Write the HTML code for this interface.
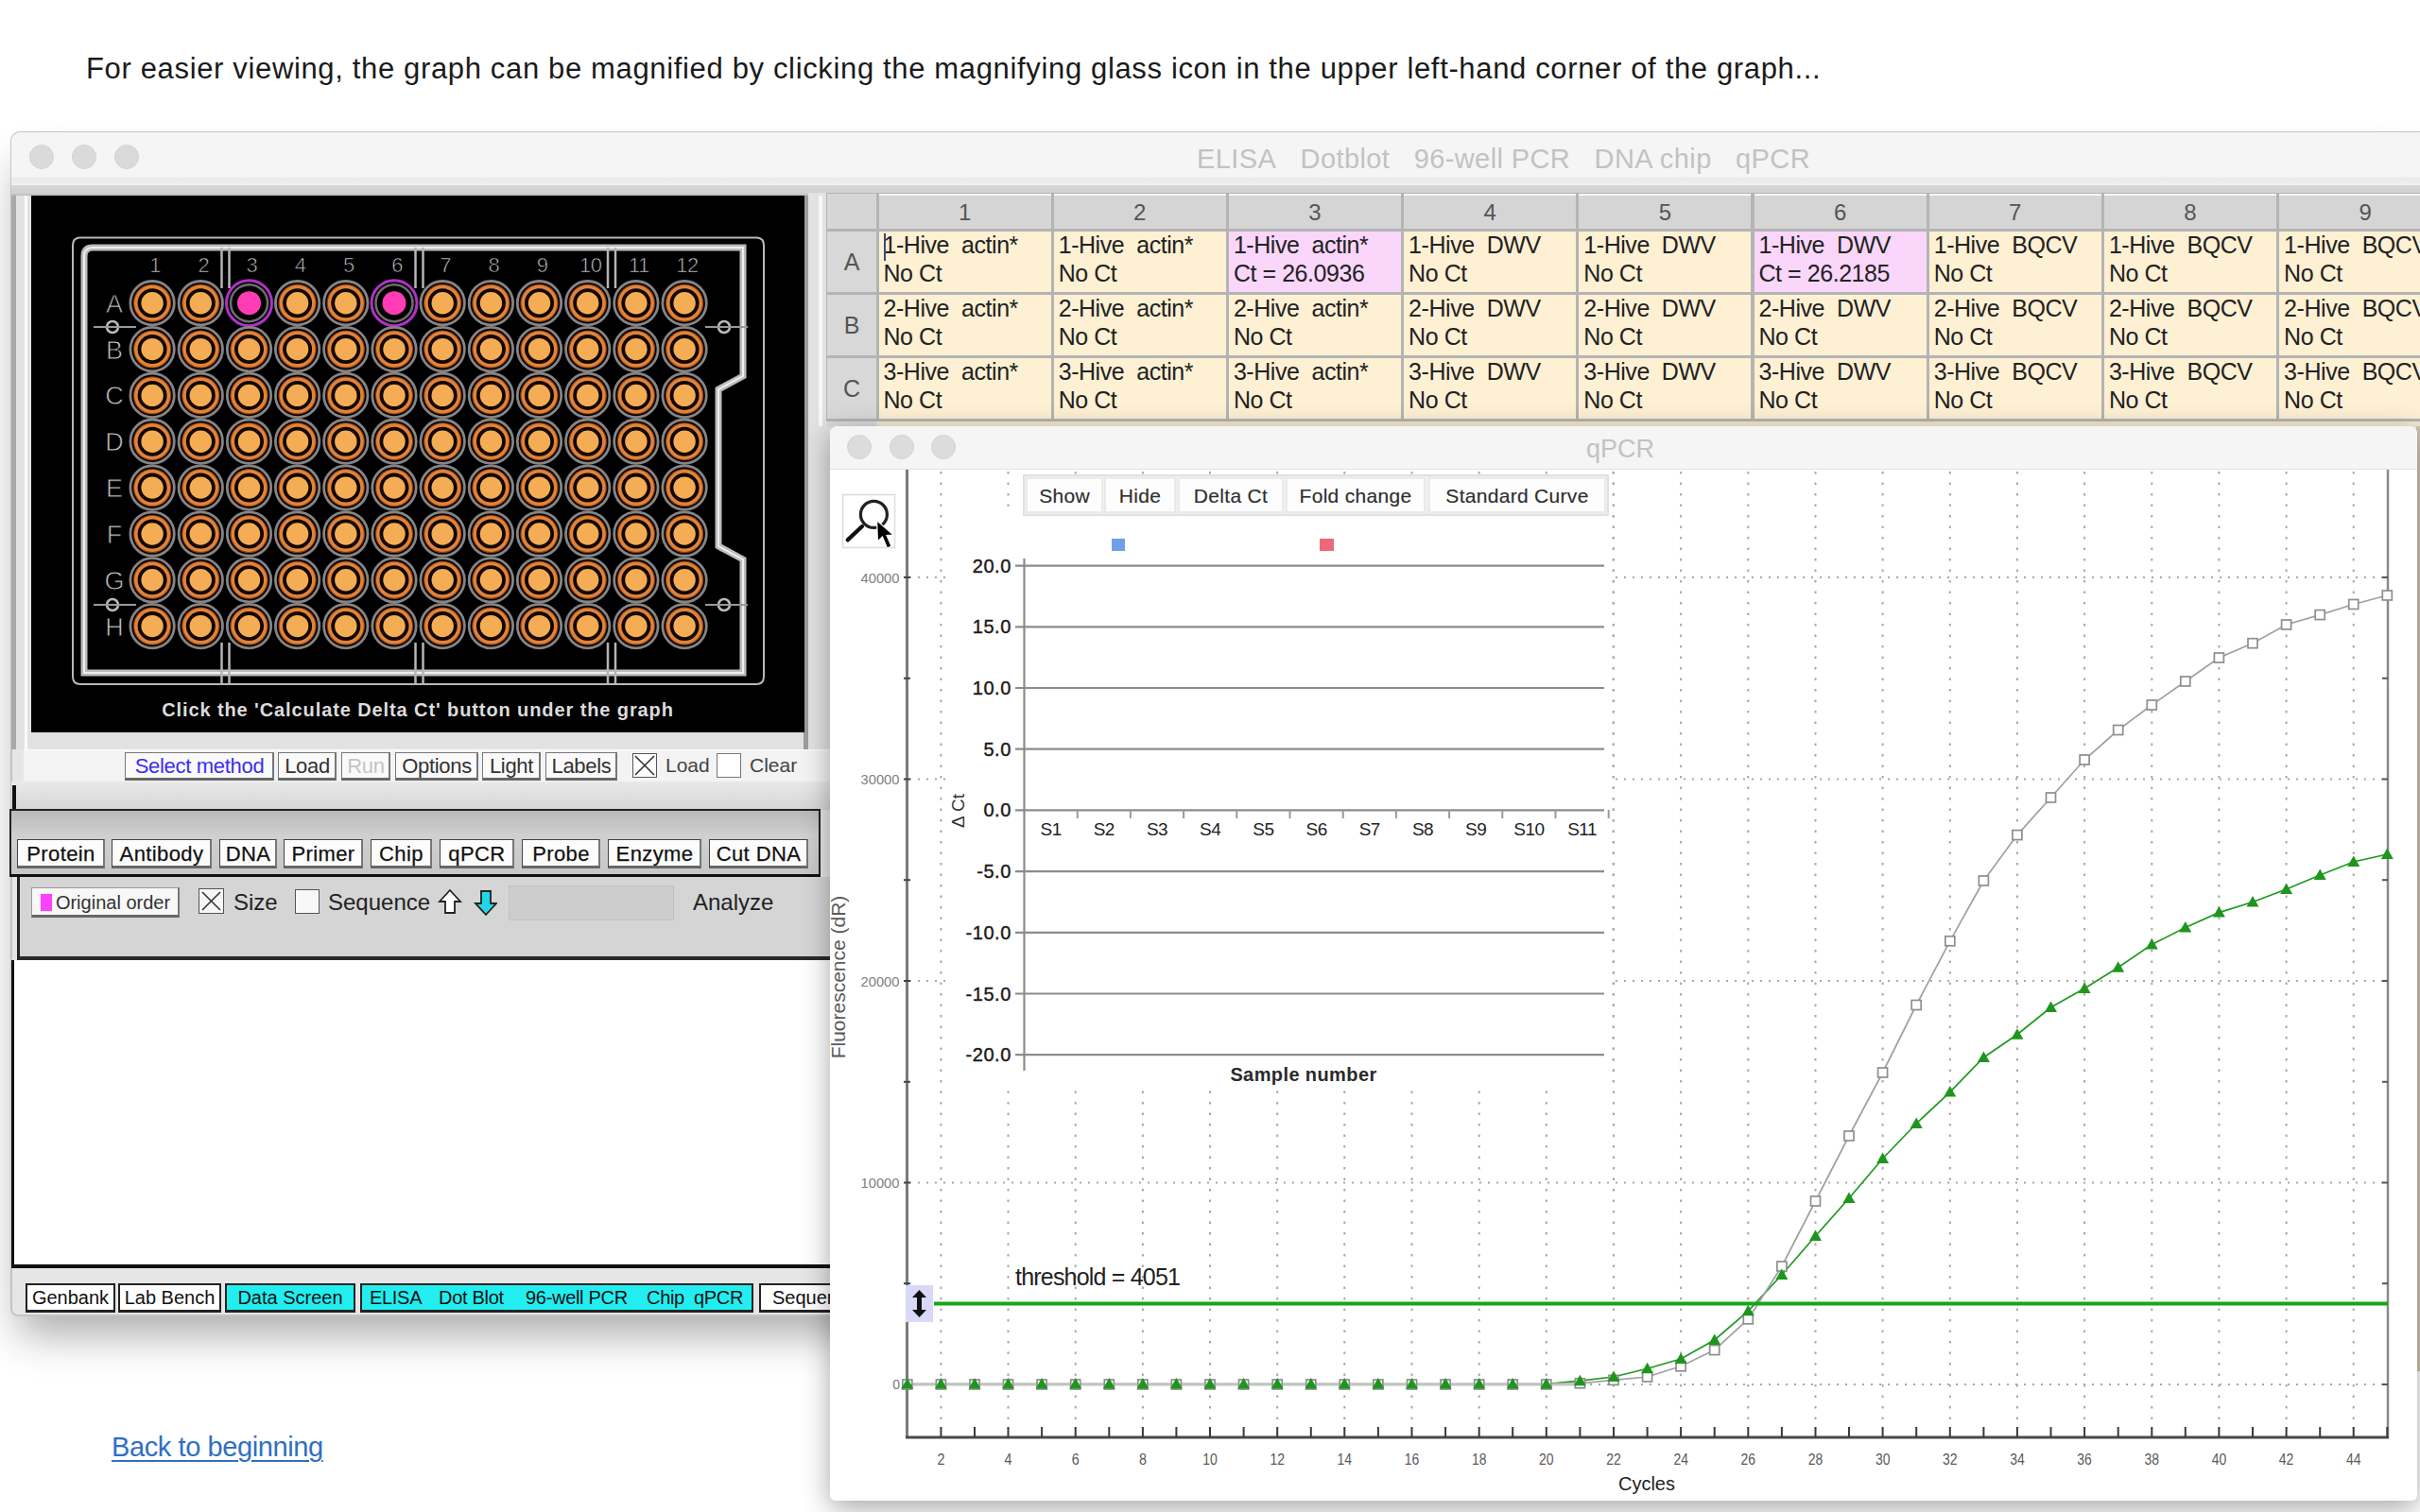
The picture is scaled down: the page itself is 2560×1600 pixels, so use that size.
<!DOCTYPE html><html><head><meta charset="utf-8"><style>
*{margin:0;padding:0;box-sizing:border-box}
html,body{width:2560px;height:1600px;overflow:hidden;background:#fff;position:relative;font-family:"Liberation Sans",sans-serif}
.a{position:absolute}
.t{position:absolute;white-space:nowrap;line-height:1}
</style></head><body>
<div class="t" style="left:91px;top:57px;font-size:31px;color:#1a1a1a;letter-spacing:0.65px">For easier viewing, the graph can be magnified by clicking the magnifying glass icon in the upper left-hand corner of the graph...</div>
<div class="a" style="left:11px;top:139px;width:2560px;height:1254px;background:#e6e6e6;box-shadow:0 28px 44px -8px rgba(0,0,0,0.32);border-radius:10px 0 0 8px;border:2px solid #c4c4c4"></div>
<div class="a" style="left:12px;top:140px;width:2560px;height:48px;background:#f5f5f5;border-radius:9px 0 0 0"></div>
<div class="a" style="left:12px;top:188px;width:2560px;height:19px;background:linear-gradient(#e8e8e8,#f2f2f2 40%,#d6d6d6 45%,#d2d2d2 85%,#b8b8b8)"></div>
<div class="a" style="left:31px;top:153px;width:26px;height:26px;border-radius:50%;background:#dadada;border:1px solid #d3d3d3"></div>
<div class="a" style="left:76px;top:153px;width:26px;height:26px;border-radius:50%;background:#dadada;border:1px solid #d3d3d3"></div>
<div class="a" style="left:121px;top:153px;width:26px;height:26px;border-radius:50%;background:#dadada;border:1px solid #d3d3d3"></div>
<div class="t" style="left:1266px;top:154px;font-size:29px;color:#c2c2c2;letter-spacing:0.4px">ELISA&nbsp;&nbsp; Dotblot&nbsp;&nbsp; 96-well PCR&nbsp;&nbsp; DNA chip&nbsp;&nbsp; qPCR</div>
<div class="a" style="left:12px;top:207px;width:866px;height:586px;background:#e2e2e2"></div>
<div class="a" style="left:12px;top:207px;width:5px;height:586px;background:#a9a9a9"></div>
<div class="a" style="left:26px;top:207px;width:3px;height:586px;background:#fbfbfb"></div>
<div class="a" style="left:850px;top:207px;width:5px;height:586px;background:#9d9d9d"></div>
<div class="a" style="left:33px;top:207px;width:818px;height:568px;background:#000"></div>
<svg class="a" style="left:0;top:0" width="880" height="800" viewBox="0 0 880 800"><g fill="none" stroke="#c8c8c8"><path d="M85 251.5 H800 Q808 251.5 808 259.5 V716 Q808 724 800 724 H85 Q77 724 77 716 V259.5 Q77 251.5 85 251.5 Z" stroke-width="2" stroke="#b8b8b8"/><path d="M98 262 H786 V398 L760 412 V578 L786 592 V712 H89 V271 Q89 262 98 262 Z" stroke-width="7" stroke="#bcbcbc"/><path d="M98 262 H786 V398 L760 412 V578 L786 592 V712 H89 V271 Q89 262 98 262 Z" stroke-width="2" stroke="#eeeeee"/><path d="M234.5 262 V305 M242.5 262 V305 M234.5 680 V724 M242.5 680 V724" stroke-width="2.5" stroke="#b5b5b5"/><path d="M439.5 262 V305 M447.5 262 V305 M439.5 680 V724 M447.5 680 V724" stroke-width="2.5" stroke="#b5b5b5"/><path d="M643 262 V305 M651 262 V305 M643 680 V724 M651 680 V724" stroke-width="2.5" stroke="#b5b5b5"/></g><circle cx="119" cy="346" r="6" fill="#000" stroke="#bbb" stroke-width="2.5"/><path d="M99 346 H144" stroke="#999" stroke-width="2"/><circle cx="766" cy="346" r="6" fill="#000" stroke="#bbb" stroke-width="2.5"/><path d="M746 346 H791" stroke="#999" stroke-width="2"/><circle cx="119" cy="640" r="6" fill="#000" stroke="#bbb" stroke-width="2.5"/><path d="M99 640 H144" stroke="#999" stroke-width="2"/><circle cx="766" cy="640" r="6" fill="#000" stroke="#bbb" stroke-width="2.5"/><path d="M746 640 H791" stroke="#999" stroke-width="2"/><text x="164.1" y="288" font-family="Liberation Sans" font-size="22" fill="#c4c4c4" stroke="#000" stroke-width="0.7" text-anchor="middle" letter-spacing="-0.5">1</text><text x="215.28" y="288" font-family="Liberation Sans" font-size="22" fill="#c4c4c4" stroke="#000" stroke-width="0.7" text-anchor="middle" letter-spacing="-0.5">2</text><text x="266.46" y="288" font-family="Liberation Sans" font-size="22" fill="#c4c4c4" stroke="#000" stroke-width="0.7" text-anchor="middle" letter-spacing="-0.5">3</text><text x="317.64" y="288" font-family="Liberation Sans" font-size="22" fill="#c4c4c4" stroke="#000" stroke-width="0.7" text-anchor="middle" letter-spacing="-0.5">4</text><text x="368.82" y="288" font-family="Liberation Sans" font-size="22" fill="#c4c4c4" stroke="#000" stroke-width="0.7" text-anchor="middle" letter-spacing="-0.5">5</text><text x="420.0" y="288" font-family="Liberation Sans" font-size="22" fill="#c4c4c4" stroke="#000" stroke-width="0.7" text-anchor="middle" letter-spacing="-0.5">6</text><text x="471.17999999999995" y="288" font-family="Liberation Sans" font-size="22" fill="#c4c4c4" stroke="#000" stroke-width="0.7" text-anchor="middle" letter-spacing="-0.5">7</text><text x="522.36" y="288" font-family="Liberation Sans" font-size="22" fill="#c4c4c4" stroke="#000" stroke-width="0.7" text-anchor="middle" letter-spacing="-0.5">8</text><text x="573.54" y="288" font-family="Liberation Sans" font-size="22" fill="#c4c4c4" stroke="#000" stroke-width="0.7" text-anchor="middle" letter-spacing="-0.5">9</text><text x="624.72" y="288" font-family="Liberation Sans" font-size="22" fill="#c4c4c4" stroke="#000" stroke-width="0.7" text-anchor="middle" letter-spacing="-0.5">10</text><text x="675.9" y="288" font-family="Liberation Sans" font-size="22" fill="#c4c4c4" stroke="#000" stroke-width="0.7" text-anchor="middle" letter-spacing="-0.5">11</text><text x="727.08" y="288" font-family="Liberation Sans" font-size="22" fill="#c4c4c4" stroke="#000" stroke-width="0.7" text-anchor="middle" letter-spacing="-0.5">12</text><text x="121" y="330.7" font-family="Liberation Sans" font-size="27" fill="#c4c4c4" stroke="#000" stroke-width="0.8" text-anchor="middle">A</text><text x="121" y="379.55" font-family="Liberation Sans" font-size="27" fill="#c4c4c4" stroke="#000" stroke-width="0.8" text-anchor="middle">B</text><text x="121" y="428.4" font-family="Liberation Sans" font-size="27" fill="#c4c4c4" stroke="#000" stroke-width="0.8" text-anchor="middle">C</text><text x="121" y="477.25" font-family="Liberation Sans" font-size="27" fill="#c4c4c4" stroke="#000" stroke-width="0.8" text-anchor="middle">D</text><text x="121" y="526.1" font-family="Liberation Sans" font-size="27" fill="#c4c4c4" stroke="#000" stroke-width="0.8" text-anchor="middle">E</text><text x="121" y="574.95" font-family="Liberation Sans" font-size="27" fill="#c4c4c4" stroke="#000" stroke-width="0.8" text-anchor="middle">F</text><text x="121" y="623.8" font-family="Liberation Sans" font-size="27" fill="#c4c4c4" stroke="#000" stroke-width="0.8" text-anchor="middle">G</text><text x="121" y="672.65" font-family="Liberation Sans" font-size="27" fill="#c4c4c4" stroke="#000" stroke-width="0.8" text-anchor="middle">H</text><circle cx="161.1" cy="320.7" r="23.2" fill="#000" stroke="#858585" stroke-width="2.8"/><circle cx="161.1" cy="320.7" r="20.2" fill="#8a3a10"/><circle cx="161.1" cy="320.7" r="19" fill="#e0843a"/><circle cx="161.1" cy="320.7" r="13.6" fill="#f5ad55" stroke="#120600" stroke-width="3.8"/><circle cx="212.3" cy="320.7" r="23.2" fill="#000" stroke="#858585" stroke-width="2.8"/><circle cx="212.3" cy="320.7" r="20.2" fill="#8a3a10"/><circle cx="212.3" cy="320.7" r="19" fill="#e0843a"/><circle cx="212.3" cy="320.7" r="13.6" fill="#f5ad55" stroke="#120600" stroke-width="3.8"/><circle cx="263.5" cy="320.7" r="24" fill="#000" stroke="#b030c8" stroke-width="3"/><circle cx="263.5" cy="320.7" r="19.5" fill="none" stroke="#6e6e6e" stroke-width="2.5"/><circle cx="263.5" cy="320.7" r="12.5" fill="#ff3cb4"/><circle cx="314.6" cy="320.7" r="23.2" fill="#000" stroke="#858585" stroke-width="2.8"/><circle cx="314.6" cy="320.7" r="20.2" fill="#8a3a10"/><circle cx="314.6" cy="320.7" r="19" fill="#e0843a"/><circle cx="314.6" cy="320.7" r="13.6" fill="#f5ad55" stroke="#120600" stroke-width="3.8"/><circle cx="365.8" cy="320.7" r="23.2" fill="#000" stroke="#858585" stroke-width="2.8"/><circle cx="365.8" cy="320.7" r="20.2" fill="#8a3a10"/><circle cx="365.8" cy="320.7" r="19" fill="#e0843a"/><circle cx="365.8" cy="320.7" r="13.6" fill="#f5ad55" stroke="#120600" stroke-width="3.8"/><circle cx="417.0" cy="320.7" r="24" fill="#000" stroke="#b030c8" stroke-width="3"/><circle cx="417.0" cy="320.7" r="19.5" fill="none" stroke="#6e6e6e" stroke-width="2.5"/><circle cx="417.0" cy="320.7" r="12.5" fill="#ff3cb4"/><circle cx="468.2" cy="320.7" r="23.2" fill="#000" stroke="#858585" stroke-width="2.8"/><circle cx="468.2" cy="320.7" r="20.2" fill="#8a3a10"/><circle cx="468.2" cy="320.7" r="19" fill="#e0843a"/><circle cx="468.2" cy="320.7" r="13.6" fill="#f5ad55" stroke="#120600" stroke-width="3.8"/><circle cx="519.4" cy="320.7" r="23.2" fill="#000" stroke="#858585" stroke-width="2.8"/><circle cx="519.4" cy="320.7" r="20.2" fill="#8a3a10"/><circle cx="519.4" cy="320.7" r="19" fill="#e0843a"/><circle cx="519.4" cy="320.7" r="13.6" fill="#f5ad55" stroke="#120600" stroke-width="3.8"/><circle cx="570.5" cy="320.7" r="23.2" fill="#000" stroke="#858585" stroke-width="2.8"/><circle cx="570.5" cy="320.7" r="20.2" fill="#8a3a10"/><circle cx="570.5" cy="320.7" r="19" fill="#e0843a"/><circle cx="570.5" cy="320.7" r="13.6" fill="#f5ad55" stroke="#120600" stroke-width="3.8"/><circle cx="621.7" cy="320.7" r="23.2" fill="#000" stroke="#858585" stroke-width="2.8"/><circle cx="621.7" cy="320.7" r="20.2" fill="#8a3a10"/><circle cx="621.7" cy="320.7" r="19" fill="#e0843a"/><circle cx="621.7" cy="320.7" r="13.6" fill="#f5ad55" stroke="#120600" stroke-width="3.8"/><circle cx="672.9" cy="320.7" r="23.2" fill="#000" stroke="#858585" stroke-width="2.8"/><circle cx="672.9" cy="320.7" r="20.2" fill="#8a3a10"/><circle cx="672.9" cy="320.7" r="19" fill="#e0843a"/><circle cx="672.9" cy="320.7" r="13.6" fill="#f5ad55" stroke="#120600" stroke-width="3.8"/><circle cx="724.1" cy="320.7" r="23.2" fill="#000" stroke="#858585" stroke-width="2.8"/><circle cx="724.1" cy="320.7" r="20.2" fill="#8a3a10"/><circle cx="724.1" cy="320.7" r="19" fill="#e0843a"/><circle cx="724.1" cy="320.7" r="13.6" fill="#f5ad55" stroke="#120600" stroke-width="3.8"/><circle cx="161.1" cy="369.6" r="23.2" fill="#000" stroke="#858585" stroke-width="2.8"/><circle cx="161.1" cy="369.6" r="20.2" fill="#8a3a10"/><circle cx="161.1" cy="369.6" r="19" fill="#e0843a"/><circle cx="161.1" cy="369.6" r="13.6" fill="#f5ad55" stroke="#120600" stroke-width="3.8"/><circle cx="212.3" cy="369.6" r="23.2" fill="#000" stroke="#858585" stroke-width="2.8"/><circle cx="212.3" cy="369.6" r="20.2" fill="#8a3a10"/><circle cx="212.3" cy="369.6" r="19" fill="#e0843a"/><circle cx="212.3" cy="369.6" r="13.6" fill="#f5ad55" stroke="#120600" stroke-width="3.8"/><circle cx="263.5" cy="369.6" r="23.2" fill="#000" stroke="#858585" stroke-width="2.8"/><circle cx="263.5" cy="369.6" r="20.2" fill="#8a3a10"/><circle cx="263.5" cy="369.6" r="19" fill="#e0843a"/><circle cx="263.5" cy="369.6" r="13.6" fill="#f5ad55" stroke="#120600" stroke-width="3.8"/><circle cx="314.6" cy="369.6" r="23.2" fill="#000" stroke="#858585" stroke-width="2.8"/><circle cx="314.6" cy="369.6" r="20.2" fill="#8a3a10"/><circle cx="314.6" cy="369.6" r="19" fill="#e0843a"/><circle cx="314.6" cy="369.6" r="13.6" fill="#f5ad55" stroke="#120600" stroke-width="3.8"/><circle cx="365.8" cy="369.6" r="23.2" fill="#000" stroke="#858585" stroke-width="2.8"/><circle cx="365.8" cy="369.6" r="20.2" fill="#8a3a10"/><circle cx="365.8" cy="369.6" r="19" fill="#e0843a"/><circle cx="365.8" cy="369.6" r="13.6" fill="#f5ad55" stroke="#120600" stroke-width="3.8"/><circle cx="417.0" cy="369.6" r="23.2" fill="#000" stroke="#858585" stroke-width="2.8"/><circle cx="417.0" cy="369.6" r="20.2" fill="#8a3a10"/><circle cx="417.0" cy="369.6" r="19" fill="#e0843a"/><circle cx="417.0" cy="369.6" r="13.6" fill="#f5ad55" stroke="#120600" stroke-width="3.8"/><circle cx="468.2" cy="369.6" r="23.2" fill="#000" stroke="#858585" stroke-width="2.8"/><circle cx="468.2" cy="369.6" r="20.2" fill="#8a3a10"/><circle cx="468.2" cy="369.6" r="19" fill="#e0843a"/><circle cx="468.2" cy="369.6" r="13.6" fill="#f5ad55" stroke="#120600" stroke-width="3.8"/><circle cx="519.4" cy="369.6" r="23.2" fill="#000" stroke="#858585" stroke-width="2.8"/><circle cx="519.4" cy="369.6" r="20.2" fill="#8a3a10"/><circle cx="519.4" cy="369.6" r="19" fill="#e0843a"/><circle cx="519.4" cy="369.6" r="13.6" fill="#f5ad55" stroke="#120600" stroke-width="3.8"/><circle cx="570.5" cy="369.6" r="23.2" fill="#000" stroke="#858585" stroke-width="2.8"/><circle cx="570.5" cy="369.6" r="20.2" fill="#8a3a10"/><circle cx="570.5" cy="369.6" r="19" fill="#e0843a"/><circle cx="570.5" cy="369.6" r="13.6" fill="#f5ad55" stroke="#120600" stroke-width="3.8"/><circle cx="621.7" cy="369.6" r="23.2" fill="#000" stroke="#858585" stroke-width="2.8"/><circle cx="621.7" cy="369.6" r="20.2" fill="#8a3a10"/><circle cx="621.7" cy="369.6" r="19" fill="#e0843a"/><circle cx="621.7" cy="369.6" r="13.6" fill="#f5ad55" stroke="#120600" stroke-width="3.8"/><circle cx="672.9" cy="369.6" r="23.2" fill="#000" stroke="#858585" stroke-width="2.8"/><circle cx="672.9" cy="369.6" r="20.2" fill="#8a3a10"/><circle cx="672.9" cy="369.6" r="19" fill="#e0843a"/><circle cx="672.9" cy="369.6" r="13.6" fill="#f5ad55" stroke="#120600" stroke-width="3.8"/><circle cx="724.1" cy="369.6" r="23.2" fill="#000" stroke="#858585" stroke-width="2.8"/><circle cx="724.1" cy="369.6" r="20.2" fill="#8a3a10"/><circle cx="724.1" cy="369.6" r="19" fill="#e0843a"/><circle cx="724.1" cy="369.6" r="13.6" fill="#f5ad55" stroke="#120600" stroke-width="3.8"/><circle cx="161.1" cy="418.4" r="23.2" fill="#000" stroke="#858585" stroke-width="2.8"/><circle cx="161.1" cy="418.4" r="20.2" fill="#8a3a10"/><circle cx="161.1" cy="418.4" r="19" fill="#e0843a"/><circle cx="161.1" cy="418.4" r="13.6" fill="#f5ad55" stroke="#120600" stroke-width="3.8"/><circle cx="212.3" cy="418.4" r="23.2" fill="#000" stroke="#858585" stroke-width="2.8"/><circle cx="212.3" cy="418.4" r="20.2" fill="#8a3a10"/><circle cx="212.3" cy="418.4" r="19" fill="#e0843a"/><circle cx="212.3" cy="418.4" r="13.6" fill="#f5ad55" stroke="#120600" stroke-width="3.8"/><circle cx="263.5" cy="418.4" r="23.2" fill="#000" stroke="#858585" stroke-width="2.8"/><circle cx="263.5" cy="418.4" r="20.2" fill="#8a3a10"/><circle cx="263.5" cy="418.4" r="19" fill="#e0843a"/><circle cx="263.5" cy="418.4" r="13.6" fill="#f5ad55" stroke="#120600" stroke-width="3.8"/><circle cx="314.6" cy="418.4" r="23.2" fill="#000" stroke="#858585" stroke-width="2.8"/><circle cx="314.6" cy="418.4" r="20.2" fill="#8a3a10"/><circle cx="314.6" cy="418.4" r="19" fill="#e0843a"/><circle cx="314.6" cy="418.4" r="13.6" fill="#f5ad55" stroke="#120600" stroke-width="3.8"/><circle cx="365.8" cy="418.4" r="23.2" fill="#000" stroke="#858585" stroke-width="2.8"/><circle cx="365.8" cy="418.4" r="20.2" fill="#8a3a10"/><circle cx="365.8" cy="418.4" r="19" fill="#e0843a"/><circle cx="365.8" cy="418.4" r="13.6" fill="#f5ad55" stroke="#120600" stroke-width="3.8"/><circle cx="417.0" cy="418.4" r="23.2" fill="#000" stroke="#858585" stroke-width="2.8"/><circle cx="417.0" cy="418.4" r="20.2" fill="#8a3a10"/><circle cx="417.0" cy="418.4" r="19" fill="#e0843a"/><circle cx="417.0" cy="418.4" r="13.6" fill="#f5ad55" stroke="#120600" stroke-width="3.8"/><circle cx="468.2" cy="418.4" r="23.2" fill="#000" stroke="#858585" stroke-width="2.8"/><circle cx="468.2" cy="418.4" r="20.2" fill="#8a3a10"/><circle cx="468.2" cy="418.4" r="19" fill="#e0843a"/><circle cx="468.2" cy="418.4" r="13.6" fill="#f5ad55" stroke="#120600" stroke-width="3.8"/><circle cx="519.4" cy="418.4" r="23.2" fill="#000" stroke="#858585" stroke-width="2.8"/><circle cx="519.4" cy="418.4" r="20.2" fill="#8a3a10"/><circle cx="519.4" cy="418.4" r="19" fill="#e0843a"/><circle cx="519.4" cy="418.4" r="13.6" fill="#f5ad55" stroke="#120600" stroke-width="3.8"/><circle cx="570.5" cy="418.4" r="23.2" fill="#000" stroke="#858585" stroke-width="2.8"/><circle cx="570.5" cy="418.4" r="20.2" fill="#8a3a10"/><circle cx="570.5" cy="418.4" r="19" fill="#e0843a"/><circle cx="570.5" cy="418.4" r="13.6" fill="#f5ad55" stroke="#120600" stroke-width="3.8"/><circle cx="621.7" cy="418.4" r="23.2" fill="#000" stroke="#858585" stroke-width="2.8"/><circle cx="621.7" cy="418.4" r="20.2" fill="#8a3a10"/><circle cx="621.7" cy="418.4" r="19" fill="#e0843a"/><circle cx="621.7" cy="418.4" r="13.6" fill="#f5ad55" stroke="#120600" stroke-width="3.8"/><circle cx="672.9" cy="418.4" r="23.2" fill="#000" stroke="#858585" stroke-width="2.8"/><circle cx="672.9" cy="418.4" r="20.2" fill="#8a3a10"/><circle cx="672.9" cy="418.4" r="19" fill="#e0843a"/><circle cx="672.9" cy="418.4" r="13.6" fill="#f5ad55" stroke="#120600" stroke-width="3.8"/><circle cx="724.1" cy="418.4" r="23.2" fill="#000" stroke="#858585" stroke-width="2.8"/><circle cx="724.1" cy="418.4" r="20.2" fill="#8a3a10"/><circle cx="724.1" cy="418.4" r="19" fill="#e0843a"/><circle cx="724.1" cy="418.4" r="13.6" fill="#f5ad55" stroke="#120600" stroke-width="3.8"/><circle cx="161.1" cy="467.2" r="23.2" fill="#000" stroke="#858585" stroke-width="2.8"/><circle cx="161.1" cy="467.2" r="20.2" fill="#8a3a10"/><circle cx="161.1" cy="467.2" r="19" fill="#e0843a"/><circle cx="161.1" cy="467.2" r="13.6" fill="#f5ad55" stroke="#120600" stroke-width="3.8"/><circle cx="212.3" cy="467.2" r="23.2" fill="#000" stroke="#858585" stroke-width="2.8"/><circle cx="212.3" cy="467.2" r="20.2" fill="#8a3a10"/><circle cx="212.3" cy="467.2" r="19" fill="#e0843a"/><circle cx="212.3" cy="467.2" r="13.6" fill="#f5ad55" stroke="#120600" stroke-width="3.8"/><circle cx="263.5" cy="467.2" r="23.2" fill="#000" stroke="#858585" stroke-width="2.8"/><circle cx="263.5" cy="467.2" r="20.2" fill="#8a3a10"/><circle cx="263.5" cy="467.2" r="19" fill="#e0843a"/><circle cx="263.5" cy="467.2" r="13.6" fill="#f5ad55" stroke="#120600" stroke-width="3.8"/><circle cx="314.6" cy="467.2" r="23.2" fill="#000" stroke="#858585" stroke-width="2.8"/><circle cx="314.6" cy="467.2" r="20.2" fill="#8a3a10"/><circle cx="314.6" cy="467.2" r="19" fill="#e0843a"/><circle cx="314.6" cy="467.2" r="13.6" fill="#f5ad55" stroke="#120600" stroke-width="3.8"/><circle cx="365.8" cy="467.2" r="23.2" fill="#000" stroke="#858585" stroke-width="2.8"/><circle cx="365.8" cy="467.2" r="20.2" fill="#8a3a10"/><circle cx="365.8" cy="467.2" r="19" fill="#e0843a"/><circle cx="365.8" cy="467.2" r="13.6" fill="#f5ad55" stroke="#120600" stroke-width="3.8"/><circle cx="417.0" cy="467.2" r="23.2" fill="#000" stroke="#858585" stroke-width="2.8"/><circle cx="417.0" cy="467.2" r="20.2" fill="#8a3a10"/><circle cx="417.0" cy="467.2" r="19" fill="#e0843a"/><circle cx="417.0" cy="467.2" r="13.6" fill="#f5ad55" stroke="#120600" stroke-width="3.8"/><circle cx="468.2" cy="467.2" r="23.2" fill="#000" stroke="#858585" stroke-width="2.8"/><circle cx="468.2" cy="467.2" r="20.2" fill="#8a3a10"/><circle cx="468.2" cy="467.2" r="19" fill="#e0843a"/><circle cx="468.2" cy="467.2" r="13.6" fill="#f5ad55" stroke="#120600" stroke-width="3.8"/><circle cx="519.4" cy="467.2" r="23.2" fill="#000" stroke="#858585" stroke-width="2.8"/><circle cx="519.4" cy="467.2" r="20.2" fill="#8a3a10"/><circle cx="519.4" cy="467.2" r="19" fill="#e0843a"/><circle cx="519.4" cy="467.2" r="13.6" fill="#f5ad55" stroke="#120600" stroke-width="3.8"/><circle cx="570.5" cy="467.2" r="23.2" fill="#000" stroke="#858585" stroke-width="2.8"/><circle cx="570.5" cy="467.2" r="20.2" fill="#8a3a10"/><circle cx="570.5" cy="467.2" r="19" fill="#e0843a"/><circle cx="570.5" cy="467.2" r="13.6" fill="#f5ad55" stroke="#120600" stroke-width="3.8"/><circle cx="621.7" cy="467.2" r="23.2" fill="#000" stroke="#858585" stroke-width="2.8"/><circle cx="621.7" cy="467.2" r="20.2" fill="#8a3a10"/><circle cx="621.7" cy="467.2" r="19" fill="#e0843a"/><circle cx="621.7" cy="467.2" r="13.6" fill="#f5ad55" stroke="#120600" stroke-width="3.8"/><circle cx="672.9" cy="467.2" r="23.2" fill="#000" stroke="#858585" stroke-width="2.8"/><circle cx="672.9" cy="467.2" r="20.2" fill="#8a3a10"/><circle cx="672.9" cy="467.2" r="19" fill="#e0843a"/><circle cx="672.9" cy="467.2" r="13.6" fill="#f5ad55" stroke="#120600" stroke-width="3.8"/><circle cx="724.1" cy="467.2" r="23.2" fill="#000" stroke="#858585" stroke-width="2.8"/><circle cx="724.1" cy="467.2" r="20.2" fill="#8a3a10"/><circle cx="724.1" cy="467.2" r="19" fill="#e0843a"/><circle cx="724.1" cy="467.2" r="13.6" fill="#f5ad55" stroke="#120600" stroke-width="3.8"/><circle cx="161.1" cy="516.1" r="23.2" fill="#000" stroke="#858585" stroke-width="2.8"/><circle cx="161.1" cy="516.1" r="20.2" fill="#8a3a10"/><circle cx="161.1" cy="516.1" r="19" fill="#e0843a"/><circle cx="161.1" cy="516.1" r="13.6" fill="#f5ad55" stroke="#120600" stroke-width="3.8"/><circle cx="212.3" cy="516.1" r="23.2" fill="#000" stroke="#858585" stroke-width="2.8"/><circle cx="212.3" cy="516.1" r="20.2" fill="#8a3a10"/><circle cx="212.3" cy="516.1" r="19" fill="#e0843a"/><circle cx="212.3" cy="516.1" r="13.6" fill="#f5ad55" stroke="#120600" stroke-width="3.8"/><circle cx="263.5" cy="516.1" r="23.2" fill="#000" stroke="#858585" stroke-width="2.8"/><circle cx="263.5" cy="516.1" r="20.2" fill="#8a3a10"/><circle cx="263.5" cy="516.1" r="19" fill="#e0843a"/><circle cx="263.5" cy="516.1" r="13.6" fill="#f5ad55" stroke="#120600" stroke-width="3.8"/><circle cx="314.6" cy="516.1" r="23.2" fill="#000" stroke="#858585" stroke-width="2.8"/><circle cx="314.6" cy="516.1" r="20.2" fill="#8a3a10"/><circle cx="314.6" cy="516.1" r="19" fill="#e0843a"/><circle cx="314.6" cy="516.1" r="13.6" fill="#f5ad55" stroke="#120600" stroke-width="3.8"/><circle cx="365.8" cy="516.1" r="23.2" fill="#000" stroke="#858585" stroke-width="2.8"/><circle cx="365.8" cy="516.1" r="20.2" fill="#8a3a10"/><circle cx="365.8" cy="516.1" r="19" fill="#e0843a"/><circle cx="365.8" cy="516.1" r="13.6" fill="#f5ad55" stroke="#120600" stroke-width="3.8"/><circle cx="417.0" cy="516.1" r="23.2" fill="#000" stroke="#858585" stroke-width="2.8"/><circle cx="417.0" cy="516.1" r="20.2" fill="#8a3a10"/><circle cx="417.0" cy="516.1" r="19" fill="#e0843a"/><circle cx="417.0" cy="516.1" r="13.6" fill="#f5ad55" stroke="#120600" stroke-width="3.8"/><circle cx="468.2" cy="516.1" r="23.2" fill="#000" stroke="#858585" stroke-width="2.8"/><circle cx="468.2" cy="516.1" r="20.2" fill="#8a3a10"/><circle cx="468.2" cy="516.1" r="19" fill="#e0843a"/><circle cx="468.2" cy="516.1" r="13.6" fill="#f5ad55" stroke="#120600" stroke-width="3.8"/><circle cx="519.4" cy="516.1" r="23.2" fill="#000" stroke="#858585" stroke-width="2.8"/><circle cx="519.4" cy="516.1" r="20.2" fill="#8a3a10"/><circle cx="519.4" cy="516.1" r="19" fill="#e0843a"/><circle cx="519.4" cy="516.1" r="13.6" fill="#f5ad55" stroke="#120600" stroke-width="3.8"/><circle cx="570.5" cy="516.1" r="23.2" fill="#000" stroke="#858585" stroke-width="2.8"/><circle cx="570.5" cy="516.1" r="20.2" fill="#8a3a10"/><circle cx="570.5" cy="516.1" r="19" fill="#e0843a"/><circle cx="570.5" cy="516.1" r="13.6" fill="#f5ad55" stroke="#120600" stroke-width="3.8"/><circle cx="621.7" cy="516.1" r="23.2" fill="#000" stroke="#858585" stroke-width="2.8"/><circle cx="621.7" cy="516.1" r="20.2" fill="#8a3a10"/><circle cx="621.7" cy="516.1" r="19" fill="#e0843a"/><circle cx="621.7" cy="516.1" r="13.6" fill="#f5ad55" stroke="#120600" stroke-width="3.8"/><circle cx="672.9" cy="516.1" r="23.2" fill="#000" stroke="#858585" stroke-width="2.8"/><circle cx="672.9" cy="516.1" r="20.2" fill="#8a3a10"/><circle cx="672.9" cy="516.1" r="19" fill="#e0843a"/><circle cx="672.9" cy="516.1" r="13.6" fill="#f5ad55" stroke="#120600" stroke-width="3.8"/><circle cx="724.1" cy="516.1" r="23.2" fill="#000" stroke="#858585" stroke-width="2.8"/><circle cx="724.1" cy="516.1" r="20.2" fill="#8a3a10"/><circle cx="724.1" cy="516.1" r="19" fill="#e0843a"/><circle cx="724.1" cy="516.1" r="13.6" fill="#f5ad55" stroke="#120600" stroke-width="3.8"/><circle cx="161.1" cy="565.0" r="23.2" fill="#000" stroke="#858585" stroke-width="2.8"/><circle cx="161.1" cy="565.0" r="20.2" fill="#8a3a10"/><circle cx="161.1" cy="565.0" r="19" fill="#e0843a"/><circle cx="161.1" cy="565.0" r="13.6" fill="#f5ad55" stroke="#120600" stroke-width="3.8"/><circle cx="212.3" cy="565.0" r="23.2" fill="#000" stroke="#858585" stroke-width="2.8"/><circle cx="212.3" cy="565.0" r="20.2" fill="#8a3a10"/><circle cx="212.3" cy="565.0" r="19" fill="#e0843a"/><circle cx="212.3" cy="565.0" r="13.6" fill="#f5ad55" stroke="#120600" stroke-width="3.8"/><circle cx="263.5" cy="565.0" r="23.2" fill="#000" stroke="#858585" stroke-width="2.8"/><circle cx="263.5" cy="565.0" r="20.2" fill="#8a3a10"/><circle cx="263.5" cy="565.0" r="19" fill="#e0843a"/><circle cx="263.5" cy="565.0" r="13.6" fill="#f5ad55" stroke="#120600" stroke-width="3.8"/><circle cx="314.6" cy="565.0" r="23.2" fill="#000" stroke="#858585" stroke-width="2.8"/><circle cx="314.6" cy="565.0" r="20.2" fill="#8a3a10"/><circle cx="314.6" cy="565.0" r="19" fill="#e0843a"/><circle cx="314.6" cy="565.0" r="13.6" fill="#f5ad55" stroke="#120600" stroke-width="3.8"/><circle cx="365.8" cy="565.0" r="23.2" fill="#000" stroke="#858585" stroke-width="2.8"/><circle cx="365.8" cy="565.0" r="20.2" fill="#8a3a10"/><circle cx="365.8" cy="565.0" r="19" fill="#e0843a"/><circle cx="365.8" cy="565.0" r="13.6" fill="#f5ad55" stroke="#120600" stroke-width="3.8"/><circle cx="417.0" cy="565.0" r="23.2" fill="#000" stroke="#858585" stroke-width="2.8"/><circle cx="417.0" cy="565.0" r="20.2" fill="#8a3a10"/><circle cx="417.0" cy="565.0" r="19" fill="#e0843a"/><circle cx="417.0" cy="565.0" r="13.6" fill="#f5ad55" stroke="#120600" stroke-width="3.8"/><circle cx="468.2" cy="565.0" r="23.2" fill="#000" stroke="#858585" stroke-width="2.8"/><circle cx="468.2" cy="565.0" r="20.2" fill="#8a3a10"/><circle cx="468.2" cy="565.0" r="19" fill="#e0843a"/><circle cx="468.2" cy="565.0" r="13.6" fill="#f5ad55" stroke="#120600" stroke-width="3.8"/><circle cx="519.4" cy="565.0" r="23.2" fill="#000" stroke="#858585" stroke-width="2.8"/><circle cx="519.4" cy="565.0" r="20.2" fill="#8a3a10"/><circle cx="519.4" cy="565.0" r="19" fill="#e0843a"/><circle cx="519.4" cy="565.0" r="13.6" fill="#f5ad55" stroke="#120600" stroke-width="3.8"/><circle cx="570.5" cy="565.0" r="23.2" fill="#000" stroke="#858585" stroke-width="2.8"/><circle cx="570.5" cy="565.0" r="20.2" fill="#8a3a10"/><circle cx="570.5" cy="565.0" r="19" fill="#e0843a"/><circle cx="570.5" cy="565.0" r="13.6" fill="#f5ad55" stroke="#120600" stroke-width="3.8"/><circle cx="621.7" cy="565.0" r="23.2" fill="#000" stroke="#858585" stroke-width="2.8"/><circle cx="621.7" cy="565.0" r="20.2" fill="#8a3a10"/><circle cx="621.7" cy="565.0" r="19" fill="#e0843a"/><circle cx="621.7" cy="565.0" r="13.6" fill="#f5ad55" stroke="#120600" stroke-width="3.8"/><circle cx="672.9" cy="565.0" r="23.2" fill="#000" stroke="#858585" stroke-width="2.8"/><circle cx="672.9" cy="565.0" r="20.2" fill="#8a3a10"/><circle cx="672.9" cy="565.0" r="19" fill="#e0843a"/><circle cx="672.9" cy="565.0" r="13.6" fill="#f5ad55" stroke="#120600" stroke-width="3.8"/><circle cx="724.1" cy="565.0" r="23.2" fill="#000" stroke="#858585" stroke-width="2.8"/><circle cx="724.1" cy="565.0" r="20.2" fill="#8a3a10"/><circle cx="724.1" cy="565.0" r="19" fill="#e0843a"/><circle cx="724.1" cy="565.0" r="13.6" fill="#f5ad55" stroke="#120600" stroke-width="3.8"/><circle cx="161.1" cy="613.8" r="23.2" fill="#000" stroke="#858585" stroke-width="2.8"/><circle cx="161.1" cy="613.8" r="20.2" fill="#8a3a10"/><circle cx="161.1" cy="613.8" r="19" fill="#e0843a"/><circle cx="161.1" cy="613.8" r="13.6" fill="#f5ad55" stroke="#120600" stroke-width="3.8"/><circle cx="212.3" cy="613.8" r="23.2" fill="#000" stroke="#858585" stroke-width="2.8"/><circle cx="212.3" cy="613.8" r="20.2" fill="#8a3a10"/><circle cx="212.3" cy="613.8" r="19" fill="#e0843a"/><circle cx="212.3" cy="613.8" r="13.6" fill="#f5ad55" stroke="#120600" stroke-width="3.8"/><circle cx="263.5" cy="613.8" r="23.2" fill="#000" stroke="#858585" stroke-width="2.8"/><circle cx="263.5" cy="613.8" r="20.2" fill="#8a3a10"/><circle cx="263.5" cy="613.8" r="19" fill="#e0843a"/><circle cx="263.5" cy="613.8" r="13.6" fill="#f5ad55" stroke="#120600" stroke-width="3.8"/><circle cx="314.6" cy="613.8" r="23.2" fill="#000" stroke="#858585" stroke-width="2.8"/><circle cx="314.6" cy="613.8" r="20.2" fill="#8a3a10"/><circle cx="314.6" cy="613.8" r="19" fill="#e0843a"/><circle cx="314.6" cy="613.8" r="13.6" fill="#f5ad55" stroke="#120600" stroke-width="3.8"/><circle cx="365.8" cy="613.8" r="23.2" fill="#000" stroke="#858585" stroke-width="2.8"/><circle cx="365.8" cy="613.8" r="20.2" fill="#8a3a10"/><circle cx="365.8" cy="613.8" r="19" fill="#e0843a"/><circle cx="365.8" cy="613.8" r="13.6" fill="#f5ad55" stroke="#120600" stroke-width="3.8"/><circle cx="417.0" cy="613.8" r="23.2" fill="#000" stroke="#858585" stroke-width="2.8"/><circle cx="417.0" cy="613.8" r="20.2" fill="#8a3a10"/><circle cx="417.0" cy="613.8" r="19" fill="#e0843a"/><circle cx="417.0" cy="613.8" r="13.6" fill="#f5ad55" stroke="#120600" stroke-width="3.8"/><circle cx="468.2" cy="613.8" r="23.2" fill="#000" stroke="#858585" stroke-width="2.8"/><circle cx="468.2" cy="613.8" r="20.2" fill="#8a3a10"/><circle cx="468.2" cy="613.8" r="19" fill="#e0843a"/><circle cx="468.2" cy="613.8" r="13.6" fill="#f5ad55" stroke="#120600" stroke-width="3.8"/><circle cx="519.4" cy="613.8" r="23.2" fill="#000" stroke="#858585" stroke-width="2.8"/><circle cx="519.4" cy="613.8" r="20.2" fill="#8a3a10"/><circle cx="519.4" cy="613.8" r="19" fill="#e0843a"/><circle cx="519.4" cy="613.8" r="13.6" fill="#f5ad55" stroke="#120600" stroke-width="3.8"/><circle cx="570.5" cy="613.8" r="23.2" fill="#000" stroke="#858585" stroke-width="2.8"/><circle cx="570.5" cy="613.8" r="20.2" fill="#8a3a10"/><circle cx="570.5" cy="613.8" r="19" fill="#e0843a"/><circle cx="570.5" cy="613.8" r="13.6" fill="#f5ad55" stroke="#120600" stroke-width="3.8"/><circle cx="621.7" cy="613.8" r="23.2" fill="#000" stroke="#858585" stroke-width="2.8"/><circle cx="621.7" cy="613.8" r="20.2" fill="#8a3a10"/><circle cx="621.7" cy="613.8" r="19" fill="#e0843a"/><circle cx="621.7" cy="613.8" r="13.6" fill="#f5ad55" stroke="#120600" stroke-width="3.8"/><circle cx="672.9" cy="613.8" r="23.2" fill="#000" stroke="#858585" stroke-width="2.8"/><circle cx="672.9" cy="613.8" r="20.2" fill="#8a3a10"/><circle cx="672.9" cy="613.8" r="19" fill="#e0843a"/><circle cx="672.9" cy="613.8" r="13.6" fill="#f5ad55" stroke="#120600" stroke-width="3.8"/><circle cx="724.1" cy="613.8" r="23.2" fill="#000" stroke="#858585" stroke-width="2.8"/><circle cx="724.1" cy="613.8" r="20.2" fill="#8a3a10"/><circle cx="724.1" cy="613.8" r="19" fill="#e0843a"/><circle cx="724.1" cy="613.8" r="13.6" fill="#f5ad55" stroke="#120600" stroke-width="3.8"/><circle cx="161.1" cy="662.6" r="23.2" fill="#000" stroke="#858585" stroke-width="2.8"/><circle cx="161.1" cy="662.6" r="20.2" fill="#8a3a10"/><circle cx="161.1" cy="662.6" r="19" fill="#e0843a"/><circle cx="161.1" cy="662.6" r="13.6" fill="#f5ad55" stroke="#120600" stroke-width="3.8"/><circle cx="212.3" cy="662.6" r="23.2" fill="#000" stroke="#858585" stroke-width="2.8"/><circle cx="212.3" cy="662.6" r="20.2" fill="#8a3a10"/><circle cx="212.3" cy="662.6" r="19" fill="#e0843a"/><circle cx="212.3" cy="662.6" r="13.6" fill="#f5ad55" stroke="#120600" stroke-width="3.8"/><circle cx="263.5" cy="662.6" r="23.2" fill="#000" stroke="#858585" stroke-width="2.8"/><circle cx="263.5" cy="662.6" r="20.2" fill="#8a3a10"/><circle cx="263.5" cy="662.6" r="19" fill="#e0843a"/><circle cx="263.5" cy="662.6" r="13.6" fill="#f5ad55" stroke="#120600" stroke-width="3.8"/><circle cx="314.6" cy="662.6" r="23.2" fill="#000" stroke="#858585" stroke-width="2.8"/><circle cx="314.6" cy="662.6" r="20.2" fill="#8a3a10"/><circle cx="314.6" cy="662.6" r="19" fill="#e0843a"/><circle cx="314.6" cy="662.6" r="13.6" fill="#f5ad55" stroke="#120600" stroke-width="3.8"/><circle cx="365.8" cy="662.6" r="23.2" fill="#000" stroke="#858585" stroke-width="2.8"/><circle cx="365.8" cy="662.6" r="20.2" fill="#8a3a10"/><circle cx="365.8" cy="662.6" r="19" fill="#e0843a"/><circle cx="365.8" cy="662.6" r="13.6" fill="#f5ad55" stroke="#120600" stroke-width="3.8"/><circle cx="417.0" cy="662.6" r="23.2" fill="#000" stroke="#858585" stroke-width="2.8"/><circle cx="417.0" cy="662.6" r="20.2" fill="#8a3a10"/><circle cx="417.0" cy="662.6" r="19" fill="#e0843a"/><circle cx="417.0" cy="662.6" r="13.6" fill="#f5ad55" stroke="#120600" stroke-width="3.8"/><circle cx="468.2" cy="662.6" r="23.2" fill="#000" stroke="#858585" stroke-width="2.8"/><circle cx="468.2" cy="662.6" r="20.2" fill="#8a3a10"/><circle cx="468.2" cy="662.6" r="19" fill="#e0843a"/><circle cx="468.2" cy="662.6" r="13.6" fill="#f5ad55" stroke="#120600" stroke-width="3.8"/><circle cx="519.4" cy="662.6" r="23.2" fill="#000" stroke="#858585" stroke-width="2.8"/><circle cx="519.4" cy="662.6" r="20.2" fill="#8a3a10"/><circle cx="519.4" cy="662.6" r="19" fill="#e0843a"/><circle cx="519.4" cy="662.6" r="13.6" fill="#f5ad55" stroke="#120600" stroke-width="3.8"/><circle cx="570.5" cy="662.6" r="23.2" fill="#000" stroke="#858585" stroke-width="2.8"/><circle cx="570.5" cy="662.6" r="20.2" fill="#8a3a10"/><circle cx="570.5" cy="662.6" r="19" fill="#e0843a"/><circle cx="570.5" cy="662.6" r="13.6" fill="#f5ad55" stroke="#120600" stroke-width="3.8"/><circle cx="621.7" cy="662.6" r="23.2" fill="#000" stroke="#858585" stroke-width="2.8"/><circle cx="621.7" cy="662.6" r="20.2" fill="#8a3a10"/><circle cx="621.7" cy="662.6" r="19" fill="#e0843a"/><circle cx="621.7" cy="662.6" r="13.6" fill="#f5ad55" stroke="#120600" stroke-width="3.8"/><circle cx="672.9" cy="662.6" r="23.2" fill="#000" stroke="#858585" stroke-width="2.8"/><circle cx="672.9" cy="662.6" r="20.2" fill="#8a3a10"/><circle cx="672.9" cy="662.6" r="19" fill="#e0843a"/><circle cx="672.9" cy="662.6" r="13.6" fill="#f5ad55" stroke="#120600" stroke-width="3.8"/><circle cx="724.1" cy="662.6" r="23.2" fill="#000" stroke="#858585" stroke-width="2.8"/><circle cx="724.1" cy="662.6" r="20.2" fill="#8a3a10"/><circle cx="724.1" cy="662.6" r="19" fill="#e0843a"/><circle cx="724.1" cy="662.6" r="13.6" fill="#f5ad55" stroke="#120600" stroke-width="3.8"/><text x="442" y="758" font-family="Liberation Sans" font-size="20" font-weight="bold" fill="#dcdcdc" text-anchor="middle" letter-spacing="0.9">Click the 'Calculate Delta Ct' button under the graph</text></svg>
<div class="a" style="left:25px;top:793px;width:853px;height:34px;background:#f3f3f3;border-top:1px solid #fff"></div>
<div class="a" style="left:132px;top:796px;width:158px;height:30px;background:#fafafa;border:1.5px solid #777;border-bottom:3px solid #666;border-right:2px solid #777;"></div>
<div class="t" style="left:132px;top:796px;width:158px;height:30px;font-size:22px;letter-spacing:-0.3px;color:#3a2ef0;text-align:center;line-height:30px">Select method</div>
<div class="a" style="left:294px;top:796px;width:62px;height:30px;background:#fafafa;border:1.5px solid #777;border-bottom:3px solid #666;border-right:2px solid #777;"></div>
<div class="t" style="left:294px;top:796px;width:62px;height:30px;font-size:22px;letter-spacing:-0.3px;color:#333;text-align:center;line-height:30px">Load</div>
<div class="a" style="left:361px;top:796px;width:52px;height:30px;background:#fafafa;border:1.5px solid #777;border-bottom:3px solid #666;border-right:2px solid #777;"></div>
<div class="t" style="left:361px;top:796px;width:52px;height:30px;font-size:22px;letter-spacing:-0.3px;color:#c4c4c4;text-align:center;line-height:30px">Run</div>
<div class="a" style="left:418px;top:796px;width:88px;height:30px;background:#fafafa;border:1.5px solid #777;border-bottom:3px solid #666;border-right:2px solid #777;"></div>
<div class="t" style="left:418px;top:796px;width:88px;height:30px;font-size:22px;letter-spacing:-0.3px;color:#333;text-align:center;line-height:30px">Options</div>
<div class="a" style="left:510px;top:796px;width:62px;height:30px;background:#fafafa;border:1.5px solid #777;border-bottom:3px solid #666;border-right:2px solid #777;"></div>
<div class="t" style="left:510px;top:796px;width:62px;height:30px;font-size:22px;letter-spacing:-0.3px;color:#333;text-align:center;line-height:30px">Light</div>
<div class="a" style="left:577px;top:796px;width:76px;height:30px;background:#fafafa;border:1.5px solid #777;border-bottom:3px solid #666;border-right:2px solid #777;"></div>
<div class="t" style="left:577px;top:796px;width:76px;height:30px;font-size:22px;letter-spacing:-0.3px;color:#333;text-align:center;line-height:30px">Labels</div>
<div class="a" style="left:669px;top:797px;width:26px;height:26px;border:1.5px solid #555;background:#fff"></div>
<svg class="a" style="left:669px;top:797px" width="26" height="26"><path d="M3 3 L23 23 M23 3 L3 23" stroke="#333" stroke-width="1.6"/></svg>
<div class="t" style="left:704px;top:799px;font-size:21px;color:#444">Load</div>
<div class="a" style="left:758px;top:797px;width:26px;height:26px;border:1.5px solid #777;background:#fff"></div>
<div class="t" style="left:793px;top:799px;font-size:21px;color:#444">Clear</div>
<div class="a" style="left:12px;top:827px;width:866px;height:30px;background:linear-gradient(#e9e9e9,#d6d6d6)"></div>
<div class="a" style="left:13px;top:831px;width:4px;height:27px;background:#111"></div>
<div class="a" style="left:10px;top:856px;width:858px;height:72px;background:linear-gradient(#b9b9b9,#d0d0d0 40%,#c7c7c7);border:2px solid #222;border-bottom:3px solid #111"></div>
<div class="a" style="left:18px;top:888px;width:93px;height:31px;background:#fcfcfc;border:1.5px solid #444;border-bottom:3px solid #666;border-right:2px solid #777;"></div>
<div class="t" style="left:18px;top:888px;width:93px;height:31px;font-size:22px;-webkit-text-stroke:0.25px #111;letter-spacing:0.4px;color:#111;text-align:center;line-height:31px">Protein</div>
<div class="a" style="left:118px;top:888px;width:106px;height:31px;background:#fcfcfc;border:1.5px solid #444;border-bottom:3px solid #666;border-right:2px solid #777;"></div>
<div class="t" style="left:118px;top:888px;width:106px;height:31px;font-size:22px;-webkit-text-stroke:0.25px #111;letter-spacing:0.4px;color:#111;text-align:center;line-height:31px">Antibody</div>
<div class="a" style="left:232px;top:888px;width:61px;height:31px;background:#fcfcfc;border:1.5px solid #444;border-bottom:3px solid #666;border-right:2px solid #777;"></div>
<div class="t" style="left:232px;top:888px;width:61px;height:31px;font-size:22px;-webkit-text-stroke:0.25px #111;letter-spacing:0.4px;color:#111;text-align:center;line-height:31px">DNA</div>
<div class="a" style="left:300px;top:888px;width:84px;height:31px;background:#fcfcfc;border:1.5px solid #444;border-bottom:3px solid #666;border-right:2px solid #777;"></div>
<div class="t" style="left:300px;top:888px;width:84px;height:31px;font-size:22px;-webkit-text-stroke:0.25px #111;letter-spacing:0.4px;color:#111;text-align:center;line-height:31px">Primer</div>
<div class="a" style="left:392px;top:888px;width:65px;height:31px;background:#fcfcfc;border:1.5px solid #444;border-bottom:3px solid #666;border-right:2px solid #777;"></div>
<div class="t" style="left:392px;top:888px;width:65px;height:31px;font-size:22px;-webkit-text-stroke:0.25px #111;letter-spacing:0.4px;color:#111;text-align:center;line-height:31px">Chip</div>
<div class="a" style="left:465px;top:888px;width:79px;height:31px;background:#fcfcfc;border:1.5px solid #444;border-bottom:3px solid #666;border-right:2px solid #777;"></div>
<div class="t" style="left:465px;top:888px;width:79px;height:31px;font-size:22px;-webkit-text-stroke:0.25px #111;letter-spacing:0.4px;color:#111;text-align:center;line-height:31px">qPCR</div>
<div class="a" style="left:552px;top:888px;width:83px;height:31px;background:#fcfcfc;border:1.5px solid #444;border-bottom:3px solid #666;border-right:2px solid #777;"></div>
<div class="t" style="left:552px;top:888px;width:83px;height:31px;font-size:22px;-webkit-text-stroke:0.25px #111;letter-spacing:0.4px;color:#111;text-align:center;line-height:31px">Probe</div>
<div class="a" style="left:643px;top:888px;width:99px;height:31px;background:#fcfcfc;border:1.5px solid #444;border-bottom:3px solid #666;border-right:2px solid #777;"></div>
<div class="t" style="left:643px;top:888px;width:99px;height:31px;font-size:22px;-webkit-text-stroke:0.25px #111;letter-spacing:0.4px;color:#111;text-align:center;line-height:31px">Enzyme</div>
<div class="a" style="left:750px;top:888px;width:105px;height:31px;background:#fcfcfc;border:1.5px solid #444;border-bottom:3px solid #666;border-right:2px solid #777;"></div>
<div class="t" style="left:750px;top:888px;width:105px;height:31px;font-size:22px;-webkit-text-stroke:0.25px #111;letter-spacing:0.4px;color:#111;text-align:center;line-height:31px">Cut DNA</div>
<div class="a" style="left:18px;top:928px;width:860px;height:88px;background:#d5d5d5;border-left:3px solid #222;border-bottom:4px solid #2a2a2a"></div>
<div class="a" style="left:33px;top:939px;width:157px;height:32px;background:#f8f8f8;border:1.5px solid #999;border-bottom:3px solid #666;border-right:2px solid #777;"></div>
<div class="t" style="left:33px;top:939px;width:157px;height:32px;font-size:20px;color:#333;text-align:center;line-height:32px"><span style="display:inline-block;width:12px;height:18px;background:#ff40ff;margin-right:4px;vertical-align:-2px"></span>Original order</div>
<div class="a" style="left:210px;top:940px;width:27px;height:27px;border:1.5px solid #555;background:#f6f6f6"></div>
<svg class="a" style="left:210px;top:940px" width="27" height="27"><path d="M4 4 L23 23 M23 4 L4 23" stroke="#333" stroke-width="1.6"/></svg>
<div class="t" style="left:247px;top:943px;font-size:24px;color:#222">Size</div>
<div class="a" style="left:312px;top:941px;width:26px;height:26px;border:1.5px solid #555;background:#f8f8f8"></div>
<div class="t" style="left:347px;top:943px;font-size:24px;color:#222">Sequence</div>
<svg class="a" style="left:462px;top:940px" width="64" height="30"><path d="M14 2 L25 14 H19 V26 H9 V14 H3 Z" fill="#fff" stroke="#222" stroke-width="1.8"/><path d="M52 28 L63 16 H57 V3 H47 V16 H41 Z" fill="#22d8e8" stroke="#222" stroke-width="1.8"/></svg>
<div class="a" style="left:538px;top:937px;width:175px;height:37px;background:#cdcdcd;border:1px solid #c2c2c2"></div>
<div class="t" style="left:733px;top:943px;font-size:24px;color:#222">Analyze</div>
<div class="a" style="left:12px;top:1016px;width:866px;height:326px;background:#fff;border-left:3px solid #111;border-bottom:4px solid #111"></div>
<div class="a" style="left:27px;top:1358px;width:95px;height:31px;background:#fff;border:2px solid #222;border-bottom:3px solid #222"></div>
<div class="t" style="left:27px;top:1358px;width:95px;height:31px;line-height:31px;font-size:20px;color:#111;text-align:center">Genbank</div>
<div class="a" style="left:125px;top:1358px;width:109px;height:31px;background:#fff;border:2px solid #222;border-bottom:3px solid #222"></div>
<div class="t" style="left:125px;top:1358px;width:109px;height:31px;line-height:31px;font-size:20px;color:#111;text-align:center">Lab Bench</div>
<div class="a" style="left:238px;top:1358px;width:138px;height:31px;background:#22eef0;border:2px solid #222;border-bottom:3px solid #222"></div>
<div class="t" style="left:238px;top:1358px;width:138px;height:31px;line-height:31px;font-size:20px;color:#111;text-align:center">Data Screen</div>
<div class="a" style="left:381px;top:1358px;width:416px;height:31px;background:#22eef0;border:2px solid #222;border-bottom:3px solid #222"></div>
<div class="t" style="left:391px;top:1358px;height:31px;line-height:31px;font-size:20px;color:#111;letter-spacing:-0.3px">ELISA</div>
<div class="t" style="left:464px;top:1358px;height:31px;line-height:31px;font-size:20px;color:#111;letter-spacing:-0.3px">Dot Blot</div>
<div class="t" style="left:556px;top:1358px;height:31px;line-height:31px;font-size:20px;color:#111;letter-spacing:-0.3px">96-well PCR</div>
<div class="t" style="left:684px;top:1358px;height:31px;line-height:31px;font-size:20px;color:#111;letter-spacing:-0.3px">Chip</div>
<div class="t" style="left:734px;top:1358px;height:31px;line-height:31px;font-size:20px;color:#111;letter-spacing:-0.3px">qPCR</div>
<div class="a" style="left:803px;top:1358px;width:97px;height:31px;background:#fff;border:2px solid #222;border-bottom:3px solid #222"></div>
<div class="t" style="left:803px;top:1358px;width:97px;height:31px;line-height:31px;font-size:20px;color:#111;text-align:center">Sequen</div>
<div class="a" style="left:855px;top:204px;width:1710px;height:247px;background:#e2e2e2"></div>
<div class="a" style="left:866px;top:207px;width:4px;height:244px;background:#f8f8f8"></div>
<div class="a" style="left:874px;top:204px;width:1700px;height:242px;background:#b4b4b4"></div>
<div class="a" style="left:875px;top:205px;width:52px;height:37px;background:#d6d6d6"></div>
<div class="a" style="left:875px;top:245px;width:52px;height:64px;background:#d8d8d8"></div>
<div class="t" style="left:875px;top:245px;width:52px;height:64px;line-height:64px;text-align:center;font-size:25px;color:#555">A</div>
<div class="a" style="left:875px;top:312px;width:52px;height:64px;background:#d8d8d8"></div>
<div class="t" style="left:875px;top:312px;width:52px;height:64px;line-height:64px;text-align:center;font-size:25px;color:#555">B</div>
<div class="a" style="left:875px;top:379px;width:52px;height:64px;background:#d8d8d8"></div>
<div class="t" style="left:875px;top:379px;width:52px;height:64px;line-height:64px;text-align:center;font-size:25px;color:#555">C</div>
<div class="a" style="left:929.5px;top:205px;width:182.2px;height:37px;background:#d5d5d5;border-top:2px solid #f8f8f8"></div>
<div class="t" style="left:929.5px;top:205px;width:182.2px;height:37px;line-height:40px;text-align:center;font-size:24px;color:#555">1</div>
<div class="a" style="left:929.5px;top:245px;width:182.2px;height:64px;background:#fdf0d3"></div>
<div class="t" style="left:934.5px;top:243.5px;font-size:25px;line-height:30.5px;color:#222;letter-spacing:-0.45px;white-space:pre">1-Hive&nbsp; actin*<br>No Ct</div>
<div class="a" style="left:1114.7px;top:205px;width:182.2px;height:37px;background:#d5d5d5;border-top:2px solid #f8f8f8"></div>
<div class="t" style="left:1114.7px;top:205px;width:182.2px;height:37px;line-height:40px;text-align:center;font-size:24px;color:#555">2</div>
<div class="a" style="left:1114.7px;top:245px;width:182.2px;height:64px;background:#fdf0d3"></div>
<div class="t" style="left:1119.7px;top:243.5px;font-size:25px;line-height:30.5px;color:#222;letter-spacing:-0.45px;white-space:pre">1-Hive&nbsp; actin*<br>No Ct</div>
<div class="a" style="left:1299.9px;top:205px;width:182.2px;height:37px;background:#d5d5d5;border-top:2px solid #f8f8f8"></div>
<div class="t" style="left:1299.9px;top:205px;width:182.2px;height:37px;line-height:40px;text-align:center;font-size:24px;color:#555">3</div>
<div class="a" style="left:1299.9px;top:245px;width:182.2px;height:64px;background:#fad6fa"></div>
<div class="t" style="left:1304.9px;top:243.5px;font-size:25px;line-height:30.5px;color:#222;letter-spacing:-0.45px;white-space:pre">1-Hive&nbsp; actin*<br>Ct = 26.0936</div>
<div class="a" style="left:1485.1px;top:205px;width:182.2px;height:37px;background:#d5d5d5;border-top:2px solid #f8f8f8"></div>
<div class="t" style="left:1485.1px;top:205px;width:182.2px;height:37px;line-height:40px;text-align:center;font-size:24px;color:#555">4</div>
<div class="a" style="left:1485.1px;top:245px;width:182.2px;height:64px;background:#fdf0d3"></div>
<div class="t" style="left:1490.1px;top:243.5px;font-size:25px;line-height:30.5px;color:#222;letter-spacing:-0.45px;white-space:pre">1-Hive&nbsp; DWV<br>No Ct</div>
<div class="a" style="left:1670.3px;top:205px;width:182.2px;height:37px;background:#d5d5d5;border-top:2px solid #f8f8f8"></div>
<div class="t" style="left:1670.3px;top:205px;width:182.2px;height:37px;line-height:40px;text-align:center;font-size:24px;color:#555">5</div>
<div class="a" style="left:1670.3px;top:245px;width:182.2px;height:64px;background:#fdf0d3"></div>
<div class="t" style="left:1675.3px;top:243.5px;font-size:25px;line-height:30.5px;color:#222;letter-spacing:-0.45px;white-space:pre">1-Hive&nbsp; DWV<br>No Ct</div>
<div class="a" style="left:1855.5px;top:205px;width:182.2px;height:37px;background:#d5d5d5;border-top:2px solid #f8f8f8"></div>
<div class="t" style="left:1855.5px;top:205px;width:182.2px;height:37px;line-height:40px;text-align:center;font-size:24px;color:#555">6</div>
<div class="a" style="left:1855.5px;top:245px;width:182.2px;height:64px;background:#fad6fa"></div>
<div class="t" style="left:1860.5px;top:243.5px;font-size:25px;line-height:30.5px;color:#222;letter-spacing:-0.45px;white-space:pre">1-Hive&nbsp; DWV<br>Ct = 26.2185</div>
<div class="a" style="left:2040.7px;top:205px;width:182.2px;height:37px;background:#d5d5d5;border-top:2px solid #f8f8f8"></div>
<div class="t" style="left:2040.7px;top:205px;width:182.2px;height:37px;line-height:40px;text-align:center;font-size:24px;color:#555">7</div>
<div class="a" style="left:2040.7px;top:245px;width:182.2px;height:64px;background:#fdf0d3"></div>
<div class="t" style="left:2045.7px;top:243.5px;font-size:25px;line-height:30.5px;color:#222;letter-spacing:-0.45px;white-space:pre">1-Hive&nbsp; BQCV<br>No Ct</div>
<div class="a" style="left:2225.9px;top:205px;width:182.2px;height:37px;background:#d5d5d5;border-top:2px solid #f8f8f8"></div>
<div class="t" style="left:2225.9px;top:205px;width:182.2px;height:37px;line-height:40px;text-align:center;font-size:24px;color:#555">8</div>
<div class="a" style="left:2225.9px;top:245px;width:182.2px;height:64px;background:#fdf0d3"></div>
<div class="t" style="left:2230.9px;top:243.5px;font-size:25px;line-height:30.5px;color:#222;letter-spacing:-0.45px;white-space:pre">1-Hive&nbsp; BQCV<br>No Ct</div>
<div class="a" style="left:2411.1px;top:205px;width:182.2px;height:37px;background:#d5d5d5;border-top:2px solid #f8f8f8"></div>
<div class="t" style="left:2411.1px;top:205px;width:182.2px;height:37px;line-height:40px;text-align:center;font-size:24px;color:#555">9</div>
<div class="a" style="left:2411.1px;top:245px;width:182.2px;height:64px;background:#fdf0d3"></div>
<div class="t" style="left:2416.1px;top:243.5px;font-size:25px;line-height:30.5px;color:#222;letter-spacing:-0.45px;white-space:pre">1-Hive&nbsp; BQCV<br>No Ct</div>
<div class="a" style="left:929.5px;top:312px;width:182.2px;height:64px;background:#fdf0d3"></div>
<div class="t" style="left:934.5px;top:310.5px;font-size:25px;line-height:30.5px;color:#222;letter-spacing:-0.45px;white-space:pre">2-Hive&nbsp; actin*<br>No Ct</div>
<div class="a" style="left:1114.7px;top:312px;width:182.2px;height:64px;background:#fdf0d3"></div>
<div class="t" style="left:1119.7px;top:310.5px;font-size:25px;line-height:30.5px;color:#222;letter-spacing:-0.45px;white-space:pre">2-Hive&nbsp; actin*<br>No Ct</div>
<div class="a" style="left:1299.9px;top:312px;width:182.2px;height:64px;background:#fdf0d3"></div>
<div class="t" style="left:1304.9px;top:310.5px;font-size:25px;line-height:30.5px;color:#222;letter-spacing:-0.45px;white-space:pre">2-Hive&nbsp; actin*<br>No Ct</div>
<div class="a" style="left:1485.1px;top:312px;width:182.2px;height:64px;background:#fdf0d3"></div>
<div class="t" style="left:1490.1px;top:310.5px;font-size:25px;line-height:30.5px;color:#222;letter-spacing:-0.45px;white-space:pre">2-Hive&nbsp; DWV<br>No Ct</div>
<div class="a" style="left:1670.3px;top:312px;width:182.2px;height:64px;background:#fdf0d3"></div>
<div class="t" style="left:1675.3px;top:310.5px;font-size:25px;line-height:30.5px;color:#222;letter-spacing:-0.45px;white-space:pre">2-Hive&nbsp; DWV<br>No Ct</div>
<div class="a" style="left:1855.5px;top:312px;width:182.2px;height:64px;background:#fdf0d3"></div>
<div class="t" style="left:1860.5px;top:310.5px;font-size:25px;line-height:30.5px;color:#222;letter-spacing:-0.45px;white-space:pre">2-Hive&nbsp; DWV<br>No Ct</div>
<div class="a" style="left:2040.7px;top:312px;width:182.2px;height:64px;background:#fdf0d3"></div>
<div class="t" style="left:2045.7px;top:310.5px;font-size:25px;line-height:30.5px;color:#222;letter-spacing:-0.45px;white-space:pre">2-Hive&nbsp; BQCV<br>No Ct</div>
<div class="a" style="left:2225.9px;top:312px;width:182.2px;height:64px;background:#fdf0d3"></div>
<div class="t" style="left:2230.9px;top:310.5px;font-size:25px;line-height:30.5px;color:#222;letter-spacing:-0.45px;white-space:pre">2-Hive&nbsp; BQCV<br>No Ct</div>
<div class="a" style="left:2411.1px;top:312px;width:182.2px;height:64px;background:#fdf0d3"></div>
<div class="t" style="left:2416.1px;top:310.5px;font-size:25px;line-height:30.5px;color:#222;letter-spacing:-0.45px;white-space:pre">2-Hive&nbsp; BQCV<br>No Ct</div>
<div class="a" style="left:929.5px;top:379px;width:182.2px;height:64px;background:#fdf0d3"></div>
<div class="t" style="left:934.5px;top:377.5px;font-size:25px;line-height:30.5px;color:#222;letter-spacing:-0.45px;white-space:pre">3-Hive&nbsp; actin*<br>No Ct</div>
<div class="a" style="left:1114.7px;top:379px;width:182.2px;height:64px;background:#fdf0d3"></div>
<div class="t" style="left:1119.7px;top:377.5px;font-size:25px;line-height:30.5px;color:#222;letter-spacing:-0.45px;white-space:pre">3-Hive&nbsp; actin*<br>No Ct</div>
<div class="a" style="left:1299.9px;top:379px;width:182.2px;height:64px;background:#fdf0d3"></div>
<div class="t" style="left:1304.9px;top:377.5px;font-size:25px;line-height:30.5px;color:#222;letter-spacing:-0.45px;white-space:pre">3-Hive&nbsp; actin*<br>No Ct</div>
<div class="a" style="left:1485.1px;top:379px;width:182.2px;height:64px;background:#fdf0d3"></div>
<div class="t" style="left:1490.1px;top:377.5px;font-size:25px;line-height:30.5px;color:#222;letter-spacing:-0.45px;white-space:pre">3-Hive&nbsp; DWV<br>No Ct</div>
<div class="a" style="left:1670.3px;top:379px;width:182.2px;height:64px;background:#fdf0d3"></div>
<div class="t" style="left:1675.3px;top:377.5px;font-size:25px;line-height:30.5px;color:#222;letter-spacing:-0.45px;white-space:pre">3-Hive&nbsp; DWV<br>No Ct</div>
<div class="a" style="left:1855.5px;top:379px;width:182.2px;height:64px;background:#fdf0d3"></div>
<div class="t" style="left:1860.5px;top:377.5px;font-size:25px;line-height:30.5px;color:#222;letter-spacing:-0.45px;white-space:pre">3-Hive&nbsp; DWV<br>No Ct</div>
<div class="a" style="left:2040.7px;top:379px;width:182.2px;height:64px;background:#fdf0d3"></div>
<div class="t" style="left:2045.7px;top:377.5px;font-size:25px;line-height:30.5px;color:#222;letter-spacing:-0.45px;white-space:pre">3-Hive&nbsp; BQCV<br>No Ct</div>
<div class="a" style="left:2225.9px;top:379px;width:182.2px;height:64px;background:#fdf0d3"></div>
<div class="t" style="left:2230.9px;top:377.5px;font-size:25px;line-height:30.5px;color:#222;letter-spacing:-0.45px;white-space:pre">3-Hive&nbsp; BQCV<br>No Ct</div>
<div class="a" style="left:2411.1px;top:379px;width:182.2px;height:64px;background:#fdf0d3"></div>
<div class="t" style="left:2416.1px;top:377.5px;font-size:25px;line-height:30.5px;color:#222;letter-spacing:-0.45px;white-space:pre">3-Hive&nbsp; BQCV<br>No Ct</div>
<div class="a" style="left:928px;top:446px;width:1640px;height:6px;background:#f3e8cf"></div>
<div class="a" style="left:875px;top:446px;width:52px;height:6px;background:#dadada"></div>
<div class="a" style="left:935px;top:247px;width:2px;height:29px;background:#3a4a7a"></div>
<div class="a" style="left:2556px;top:451px;width:4px;height:1000px;background:#cfc6b4"></div>
<div class="a" style="left:878px;top:451px;width:1679px;height:1137px;background:#fff;border-radius:8px 8px 6px 6px;box-shadow:0 8px 30px rgba(0,0,0,0.35);overflow:hidden"></div>
<div class="a" style="left:878px;top:451px;width:1679px;height:46px;background:#f5f5f5;border-radius:8px 8px 0 0;border-bottom:1px solid #e3e3e3"></div>
<div class="a" style="left:896px;top:460px;width:26px;height:26px;border-radius:50%;background:#dcdcdc;border:1px solid #d2d2d2"></div>
<div class="a" style="left:941px;top:460px;width:26px;height:26px;border-radius:50%;background:#dcdcdc;border:1px solid #d2d2d2"></div>
<div class="a" style="left:985px;top:460px;width:26px;height:26px;border-radius:50%;background:#dcdcdc;border:1px solid #d2d2d2"></div>
<div class="t" style="left:1678px;top:462px;font-size:27px;color:#c2c2c2">qPCR</div>
<svg class="a" style="left:0;top:0" width="2560" height="1600" viewBox="0 0 2560 1600"><line x1="995.4" y1="499" x2="995.4" y2="1512" stroke="#a8a8a8" stroke-width="2" stroke-dasharray="2.5 9"/><line x1="1066.5" y1="499" x2="1066.5" y2="1512" stroke="#a8a8a8" stroke-width="2" stroke-dasharray="2.5 9"/><line x1="1137.7" y1="499" x2="1137.7" y2="1512" stroke="#a8a8a8" stroke-width="2" stroke-dasharray="2.5 9"/><line x1="1208.9" y1="499" x2="1208.9" y2="1512" stroke="#a8a8a8" stroke-width="2" stroke-dasharray="2.5 9"/><line x1="1280.0" y1="499" x2="1280.0" y2="1512" stroke="#a8a8a8" stroke-width="2" stroke-dasharray="2.5 9"/><line x1="1351.2" y1="499" x2="1351.2" y2="1512" stroke="#a8a8a8" stroke-width="2" stroke-dasharray="2.5 9"/><line x1="1422.3" y1="499" x2="1422.3" y2="1512" stroke="#a8a8a8" stroke-width="2" stroke-dasharray="2.5 9"/><line x1="1493.5" y1="499" x2="1493.5" y2="1512" stroke="#a8a8a8" stroke-width="2" stroke-dasharray="2.5 9"/><line x1="1564.7" y1="499" x2="1564.7" y2="1512" stroke="#a8a8a8" stroke-width="2" stroke-dasharray="2.5 9"/><line x1="1635.8" y1="499" x2="1635.8" y2="1512" stroke="#a8a8a8" stroke-width="2" stroke-dasharray="2.5 9"/><line x1="1707.0" y1="499" x2="1707.0" y2="1512" stroke="#a8a8a8" stroke-width="2" stroke-dasharray="2.5 9"/><line x1="1778.1" y1="499" x2="1778.1" y2="1512" stroke="#a8a8a8" stroke-width="2" stroke-dasharray="2.5 9"/><line x1="1849.3" y1="499" x2="1849.3" y2="1512" stroke="#a8a8a8" stroke-width="2" stroke-dasharray="2.5 9"/><line x1="1920.5" y1="499" x2="1920.5" y2="1512" stroke="#a8a8a8" stroke-width="2" stroke-dasharray="2.5 9"/><line x1="1991.6" y1="499" x2="1991.6" y2="1512" stroke="#a8a8a8" stroke-width="2" stroke-dasharray="2.5 9"/><line x1="2062.8" y1="499" x2="2062.8" y2="1512" stroke="#a8a8a8" stroke-width="2" stroke-dasharray="2.5 9"/><line x1="2133.9" y1="499" x2="2133.9" y2="1512" stroke="#a8a8a8" stroke-width="2" stroke-dasharray="2.5 9"/><line x1="2205.1" y1="499" x2="2205.1" y2="1512" stroke="#a8a8a8" stroke-width="2" stroke-dasharray="2.5 9"/><line x1="2276.3" y1="499" x2="2276.3" y2="1512" stroke="#a8a8a8" stroke-width="2" stroke-dasharray="2.5 9"/><line x1="2347.4" y1="499" x2="2347.4" y2="1512" stroke="#a8a8a8" stroke-width="2" stroke-dasharray="2.5 9"/><line x1="2418.6" y1="499" x2="2418.6" y2="1512" stroke="#a8a8a8" stroke-width="2" stroke-dasharray="2.5 9"/><line x1="2489.7" y1="499" x2="2489.7" y2="1512" stroke="#a8a8a8" stroke-width="2" stroke-dasharray="2.5 9"/><line x1="962" y1="1465.0" x2="2524" y2="1465.0" stroke="#a8a8a8" stroke-width="2" stroke-dasharray="2 7"/><line x1="962" y1="1251.5" x2="2524" y2="1251.5" stroke="#a8a8a8" stroke-width="2" stroke-dasharray="2 7"/><line x1="962" y1="1038.0" x2="2524" y2="1038.0" stroke="#a8a8a8" stroke-width="2" stroke-dasharray="2 7"/><line x1="962" y1="824.5" x2="2524" y2="824.5" stroke="#a8a8a8" stroke-width="2" stroke-dasharray="2 7"/><line x1="962" y1="611.0" x2="2524" y2="611.0" stroke="#a8a8a8" stroke-width="2" stroke-dasharray="2 7"/><line x1="959.5" y1="497" x2="959.5" y2="1522" stroke="#7a7a7a" stroke-width="3"/><line x1="2526" y1="497" x2="2526" y2="1522" stroke="#8a8a8a" stroke-width="2.5"/><line x1="958" y1="1521" x2="2527" y2="1521" stroke="#4a4a4a" stroke-width="3"/><line x1="995.4" y1="1510" x2="995.4" y2="1521" stroke="#3a3a3a" stroke-width="2"/><line x1="1031.0" y1="1510" x2="1031.0" y2="1521" stroke="#3a3a3a" stroke-width="2"/><line x1="1066.5" y1="1510" x2="1066.5" y2="1521" stroke="#3a3a3a" stroke-width="2"/><line x1="1102.1" y1="1510" x2="1102.1" y2="1521" stroke="#3a3a3a" stroke-width="2"/><line x1="1137.7" y1="1510" x2="1137.7" y2="1521" stroke="#3a3a3a" stroke-width="2"/><line x1="1173.3" y1="1510" x2="1173.3" y2="1521" stroke="#3a3a3a" stroke-width="2"/><line x1="1208.9" y1="1510" x2="1208.9" y2="1521" stroke="#3a3a3a" stroke-width="2"/><line x1="1244.4" y1="1510" x2="1244.4" y2="1521" stroke="#3a3a3a" stroke-width="2"/><line x1="1280.0" y1="1510" x2="1280.0" y2="1521" stroke="#3a3a3a" stroke-width="2"/><line x1="1315.6" y1="1510" x2="1315.6" y2="1521" stroke="#3a3a3a" stroke-width="2"/><line x1="1351.2" y1="1510" x2="1351.2" y2="1521" stroke="#3a3a3a" stroke-width="2"/><line x1="1386.8" y1="1510" x2="1386.8" y2="1521" stroke="#3a3a3a" stroke-width="2"/><line x1="1422.3" y1="1510" x2="1422.3" y2="1521" stroke="#3a3a3a" stroke-width="2"/><line x1="1457.9" y1="1510" x2="1457.9" y2="1521" stroke="#3a3a3a" stroke-width="2"/><line x1="1493.5" y1="1510" x2="1493.5" y2="1521" stroke="#3a3a3a" stroke-width="2"/><line x1="1529.1" y1="1510" x2="1529.1" y2="1521" stroke="#3a3a3a" stroke-width="2"/><line x1="1564.7" y1="1510" x2="1564.7" y2="1521" stroke="#3a3a3a" stroke-width="2"/><line x1="1600.2" y1="1510" x2="1600.2" y2="1521" stroke="#3a3a3a" stroke-width="2"/><line x1="1635.8" y1="1510" x2="1635.8" y2="1521" stroke="#3a3a3a" stroke-width="2"/><line x1="1671.4" y1="1510" x2="1671.4" y2="1521" stroke="#3a3a3a" stroke-width="2"/><line x1="1707.0" y1="1510" x2="1707.0" y2="1521" stroke="#3a3a3a" stroke-width="2"/><line x1="1742.6" y1="1510" x2="1742.6" y2="1521" stroke="#3a3a3a" stroke-width="2"/><line x1="1778.1" y1="1510" x2="1778.1" y2="1521" stroke="#3a3a3a" stroke-width="2"/><line x1="1813.7" y1="1510" x2="1813.7" y2="1521" stroke="#3a3a3a" stroke-width="2"/><line x1="1849.3" y1="1510" x2="1849.3" y2="1521" stroke="#3a3a3a" stroke-width="2"/><line x1="1884.9" y1="1510" x2="1884.9" y2="1521" stroke="#3a3a3a" stroke-width="2"/><line x1="1920.5" y1="1510" x2="1920.5" y2="1521" stroke="#3a3a3a" stroke-width="2"/><line x1="1956.0" y1="1510" x2="1956.0" y2="1521" stroke="#3a3a3a" stroke-width="2"/><line x1="1991.6" y1="1510" x2="1991.6" y2="1521" stroke="#3a3a3a" stroke-width="2"/><line x1="2027.2" y1="1510" x2="2027.2" y2="1521" stroke="#3a3a3a" stroke-width="2"/><line x1="2062.8" y1="1510" x2="2062.8" y2="1521" stroke="#3a3a3a" stroke-width="2"/><line x1="2098.4" y1="1510" x2="2098.4" y2="1521" stroke="#3a3a3a" stroke-width="2"/><line x1="2133.9" y1="1510" x2="2133.9" y2="1521" stroke="#3a3a3a" stroke-width="2"/><line x1="2169.5" y1="1510" x2="2169.5" y2="1521" stroke="#3a3a3a" stroke-width="2"/><line x1="2205.1" y1="1510" x2="2205.1" y2="1521" stroke="#3a3a3a" stroke-width="2"/><line x1="2240.7" y1="1510" x2="2240.7" y2="1521" stroke="#3a3a3a" stroke-width="2"/><line x1="2276.3" y1="1510" x2="2276.3" y2="1521" stroke="#3a3a3a" stroke-width="2"/><line x1="2311.8" y1="1510" x2="2311.8" y2="1521" stroke="#3a3a3a" stroke-width="2"/><line x1="2347.4" y1="1510" x2="2347.4" y2="1521" stroke="#3a3a3a" stroke-width="2"/><line x1="2383.0" y1="1510" x2="2383.0" y2="1521" stroke="#3a3a3a" stroke-width="2"/><line x1="2418.6" y1="1510" x2="2418.6" y2="1521" stroke="#3a3a3a" stroke-width="2"/><line x1="2454.2" y1="1510" x2="2454.2" y2="1521" stroke="#3a3a3a" stroke-width="2"/><line x1="2489.7" y1="1510" x2="2489.7" y2="1521" stroke="#3a3a3a" stroke-width="2"/><line x1="2525.3" y1="1510" x2="2525.3" y2="1521" stroke="#3a3a3a" stroke-width="2"/><line x1="956" y1="1465.0" x2="963" y2="1465.0" stroke="#444" stroke-width="2"/><line x1="956" y1="1358.2" x2="963" y2="1358.2" stroke="#444" stroke-width="2"/><line x1="956" y1="1251.5" x2="963" y2="1251.5" stroke="#444" stroke-width="2"/><line x1="956" y1="1144.8" x2="963" y2="1144.8" stroke="#444" stroke-width="2"/><line x1="956" y1="1038.0" x2="963" y2="1038.0" stroke="#444" stroke-width="2"/><line x1="956" y1="931.2" x2="963" y2="931.2" stroke="#444" stroke-width="2"/><line x1="956" y1="824.5" x2="963" y2="824.5" stroke="#444" stroke-width="2"/><line x1="956" y1="717.8" x2="963" y2="717.8" stroke="#444" stroke-width="2"/><line x1="956" y1="611.0" x2="963" y2="611.0" stroke="#444" stroke-width="2"/><line x1="2520" y1="1465.0" x2="2526" y2="1465.0" stroke="#555" stroke-width="2"/><line x1="2520" y1="1358.2" x2="2526" y2="1358.2" stroke="#555" stroke-width="2"/><line x1="2520" y1="1251.5" x2="2526" y2="1251.5" stroke="#555" stroke-width="2"/><line x1="2520" y1="1144.8" x2="2526" y2="1144.8" stroke="#555" stroke-width="2"/><line x1="2520" y1="1038.0" x2="2526" y2="1038.0" stroke="#555" stroke-width="2"/><line x1="2520" y1="931.2" x2="2526" y2="931.2" stroke="#555" stroke-width="2"/><line x1="2520" y1="824.5" x2="2526" y2="824.5" stroke="#555" stroke-width="2"/><line x1="2520" y1="717.8" x2="2526" y2="717.8" stroke="#555" stroke-width="2"/><line x1="2520" y1="611.0" x2="2526" y2="611.0" stroke="#555" stroke-width="2"/><text x="991.4" y="1549.5" font-family="Liberation Sans" font-size="17" fill="#5a5a5a" textLength="8" lengthAdjust="spacingAndGlyphs">2</text><text x="1062.5" y="1549.5" font-family="Liberation Sans" font-size="17" fill="#5a5a5a" textLength="8" lengthAdjust="spacingAndGlyphs">4</text><text x="1133.7" y="1549.5" font-family="Liberation Sans" font-size="17" fill="#5a5a5a" textLength="8" lengthAdjust="spacingAndGlyphs">6</text><text x="1204.9" y="1549.5" font-family="Liberation Sans" font-size="17" fill="#5a5a5a" textLength="8" lengthAdjust="spacingAndGlyphs">8</text><text x="1272.3" y="1549.5" font-family="Liberation Sans" font-size="17" fill="#5a5a5a" textLength="15.5" lengthAdjust="spacingAndGlyphs">10</text><text x="1343.4" y="1549.5" font-family="Liberation Sans" font-size="17" fill="#5a5a5a" textLength="15.5" lengthAdjust="spacingAndGlyphs">12</text><text x="1414.6" y="1549.5" font-family="Liberation Sans" font-size="17" fill="#5a5a5a" textLength="15.5" lengthAdjust="spacingAndGlyphs">14</text><text x="1485.8" y="1549.5" font-family="Liberation Sans" font-size="17" fill="#5a5a5a" textLength="15.5" lengthAdjust="spacingAndGlyphs">16</text><text x="1556.9" y="1549.5" font-family="Liberation Sans" font-size="17" fill="#5a5a5a" textLength="15.5" lengthAdjust="spacingAndGlyphs">18</text><text x="1628.1" y="1549.5" font-family="Liberation Sans" font-size="17" fill="#5a5a5a" textLength="15.5" lengthAdjust="spacingAndGlyphs">20</text><text x="1699.2" y="1549.5" font-family="Liberation Sans" font-size="17" fill="#5a5a5a" textLength="15.5" lengthAdjust="spacingAndGlyphs">22</text><text x="1770.4" y="1549.5" font-family="Liberation Sans" font-size="17" fill="#5a5a5a" textLength="15.5" lengthAdjust="spacingAndGlyphs">24</text><text x="1841.5" y="1549.5" font-family="Liberation Sans" font-size="17" fill="#5a5a5a" textLength="15.5" lengthAdjust="spacingAndGlyphs">26</text><text x="1912.7" y="1549.5" font-family="Liberation Sans" font-size="17" fill="#5a5a5a" textLength="15.5" lengthAdjust="spacingAndGlyphs">28</text><text x="1983.9" y="1549.5" font-family="Liberation Sans" font-size="17" fill="#5a5a5a" textLength="15.5" lengthAdjust="spacingAndGlyphs">30</text><text x="2055.0" y="1549.5" font-family="Liberation Sans" font-size="17" fill="#5a5a5a" textLength="15.5" lengthAdjust="spacingAndGlyphs">32</text><text x="2126.2" y="1549.5" font-family="Liberation Sans" font-size="17" fill="#5a5a5a" textLength="15.5" lengthAdjust="spacingAndGlyphs">34</text><text x="2197.3" y="1549.5" font-family="Liberation Sans" font-size="17" fill="#5a5a5a" textLength="15.5" lengthAdjust="spacingAndGlyphs">36</text><text x="2268.5" y="1549.5" font-family="Liberation Sans" font-size="17" fill="#5a5a5a" textLength="15.5" lengthAdjust="spacingAndGlyphs">38</text><text x="2339.7" y="1549.5" font-family="Liberation Sans" font-size="17" fill="#5a5a5a" textLength="15.5" lengthAdjust="spacingAndGlyphs">40</text><text x="2410.8" y="1549.5" font-family="Liberation Sans" font-size="17" fill="#5a5a5a" textLength="15.5" lengthAdjust="spacingAndGlyphs">42</text><text x="2482.0" y="1549.5" font-family="Liberation Sans" font-size="17" fill="#5a5a5a" textLength="15.5" lengthAdjust="spacingAndGlyphs">44</text><text x="910.5" y="1257.0" font-family="Liberation Sans" font-size="15" fill="#808080" textLength="41" lengthAdjust="spacingAndGlyphs">10000</text><text x="910.5" y="1043.5" font-family="Liberation Sans" font-size="15" fill="#808080" textLength="41" lengthAdjust="spacingAndGlyphs">20000</text><text x="910.5" y="830.0" font-family="Liberation Sans" font-size="15" fill="#808080" textLength="41" lengthAdjust="spacingAndGlyphs">30000</text><text x="910.5" y="616.5" font-family="Liberation Sans" font-size="15" fill="#808080" textLength="41" lengthAdjust="spacingAndGlyphs">40000</text><text x="952" y="1470.0" font-family="Liberation Sans" font-size="14" fill="#777" text-anchor="end">0</text><text x="1742" y="1577" font-family="Liberation Sans" font-size="20" fill="#222" text-anchor="middle">Cycles</text><text transform="translate(894,1034) rotate(-90)" font-family="Liberation Sans" font-size="21" fill="#5a5a5a" text-anchor="middle">Fluorescence (dR)</text><polyline points="959.8,1464.6 995.4,1464.6 1031.0,1464.6 1066.5,1464.6 1102.1,1464.6 1137.7,1464.6 1173.3,1464.6 1208.9,1464.6 1244.4,1464.6 1280.0,1464.6 1315.6,1464.6 1351.2,1464.6 1386.8,1464.6 1422.3,1464.6 1457.9,1464.6 1493.5,1464.6 1529.1,1464.6 1564.7,1464.6 1600.2,1464.6 1635.8,1464.6 1671.4,1461.2 1707.0,1457.0 1742.6,1448.3 1778.1,1438.0 1813.7,1418.0 1849.3,1387.3 1884.9,1349.0 1920.5,1308.0 1956.0,1268.0 1991.6,1226.0 2027.2,1189.0 2062.8,1155.6 2098.4,1119.0 2133.9,1094.7 2169.5,1066.0 2205.1,1046.0 2240.7,1023.8 2276.3,999.5 2311.8,981.5 2347.4,965.6 2383.0,954.5 2418.6,941.0 2454.2,926.0 2489.7,912.0 2525.3,904.0" fill="none" stroke="#1f9a1f" stroke-width="1.7"/><polyline points="959.8,1465.0 995.4,1465.0 1031.0,1465.0 1066.5,1465.0 1102.1,1465.0 1137.7,1465.0 1173.3,1465.0 1208.9,1465.0 1244.4,1465.0 1280.0,1465.0 1315.6,1465.0 1351.2,1465.0 1386.8,1465.0 1422.3,1465.0 1457.9,1465.0 1493.5,1465.0 1529.1,1465.0 1564.7,1465.0 1600.2,1465.0 1635.8,1465.0 1671.4,1463.8 1707.0,1460.4 1742.6,1457.0 1778.1,1445.8 1813.7,1428.6 1849.3,1395.9 1884.9,1340.0 1920.5,1271.0 1956.0,1202.0 1991.6,1135.0 2027.2,1063.5 2062.8,995.8 2098.4,932.0 2133.9,883.6 2169.5,844.0 2205.1,804.0 2240.7,772.5 2276.3,746.0 2311.8,721.0 2347.4,696.0 2383.0,680.7 2418.6,661.0 2454.2,650.6 2489.7,639.5 2525.3,630.0" fill="none" stroke="#a0a0a0" stroke-width="1.7"/><line x1="960" y1="1465" x2="1671.4" y2="1465" stroke="#c4c4c4" stroke-width="3"/><rect x="954.8" y="1460.0" width="10" height="10" fill="#fff" stroke="#8e8e8e" stroke-width="1.7"/><rect x="990.4" y="1460.0" width="10" height="10" fill="#fff" stroke="#8e8e8e" stroke-width="1.7"/><rect x="1026.0" y="1460.0" width="10" height="10" fill="#fff" stroke="#8e8e8e" stroke-width="1.7"/><rect x="1061.5" y="1460.0" width="10" height="10" fill="#fff" stroke="#8e8e8e" stroke-width="1.7"/><rect x="1097.1" y="1460.0" width="10" height="10" fill="#fff" stroke="#8e8e8e" stroke-width="1.7"/><rect x="1132.7" y="1460.0" width="10" height="10" fill="#fff" stroke="#8e8e8e" stroke-width="1.7"/><rect x="1168.3" y="1460.0" width="10" height="10" fill="#fff" stroke="#8e8e8e" stroke-width="1.7"/><rect x="1203.9" y="1460.0" width="10" height="10" fill="#fff" stroke="#8e8e8e" stroke-width="1.7"/><rect x="1239.4" y="1460.0" width="10" height="10" fill="#fff" stroke="#8e8e8e" stroke-width="1.7"/><rect x="1275.0" y="1460.0" width="10" height="10" fill="#fff" stroke="#8e8e8e" stroke-width="1.7"/><rect x="1310.6" y="1460.0" width="10" height="10" fill="#fff" stroke="#8e8e8e" stroke-width="1.7"/><rect x="1346.2" y="1460.0" width="10" height="10" fill="#fff" stroke="#8e8e8e" stroke-width="1.7"/><rect x="1381.8" y="1460.0" width="10" height="10" fill="#fff" stroke="#8e8e8e" stroke-width="1.7"/><rect x="1417.3" y="1460.0" width="10" height="10" fill="#fff" stroke="#8e8e8e" stroke-width="1.7"/><rect x="1452.9" y="1460.0" width="10" height="10" fill="#fff" stroke="#8e8e8e" stroke-width="1.7"/><rect x="1488.5" y="1460.0" width="10" height="10" fill="#fff" stroke="#8e8e8e" stroke-width="1.7"/><rect x="1524.1" y="1460.0" width="10" height="10" fill="#fff" stroke="#8e8e8e" stroke-width="1.7"/><rect x="1559.7" y="1460.0" width="10" height="10" fill="#fff" stroke="#8e8e8e" stroke-width="1.7"/><rect x="1595.2" y="1460.0" width="10" height="10" fill="#fff" stroke="#8e8e8e" stroke-width="1.7"/><rect x="1630.8" y="1460.0" width="10" height="10" fill="#fff" stroke="#8e8e8e" stroke-width="1.7"/><rect x="1666.4" y="1458.8" width="10" height="10" fill="#fff" stroke="#8e8e8e" stroke-width="1.7"/><rect x="1702.0" y="1455.4" width="10" height="10" fill="#fff" stroke="#8e8e8e" stroke-width="1.7"/><rect x="1737.6" y="1452.0" width="10" height="10" fill="#fff" stroke="#8e8e8e" stroke-width="1.7"/><rect x="1773.1" y="1440.8" width="10" height="10" fill="#fff" stroke="#8e8e8e" stroke-width="1.7"/><rect x="1808.7" y="1423.6" width="10" height="10" fill="#fff" stroke="#8e8e8e" stroke-width="1.7"/><rect x="1844.3" y="1390.9" width="10" height="10" fill="#fff" stroke="#8e8e8e" stroke-width="1.7"/><rect x="1879.9" y="1335.0" width="10" height="10" fill="#fff" stroke="#8e8e8e" stroke-width="1.7"/><rect x="1915.5" y="1266.0" width="10" height="10" fill="#fff" stroke="#8e8e8e" stroke-width="1.7"/><rect x="1951.0" y="1197.0" width="10" height="10" fill="#fff" stroke="#8e8e8e" stroke-width="1.7"/><rect x="1986.6" y="1130.0" width="10" height="10" fill="#fff" stroke="#8e8e8e" stroke-width="1.7"/><rect x="2022.2" y="1058.5" width="10" height="10" fill="#fff" stroke="#8e8e8e" stroke-width="1.7"/><rect x="2057.8" y="990.8" width="10" height="10" fill="#fff" stroke="#8e8e8e" stroke-width="1.7"/><rect x="2093.4" y="927.0" width="10" height="10" fill="#fff" stroke="#8e8e8e" stroke-width="1.7"/><rect x="2128.9" y="878.6" width="10" height="10" fill="#fff" stroke="#8e8e8e" stroke-width="1.7"/><rect x="2164.5" y="839.0" width="10" height="10" fill="#fff" stroke="#8e8e8e" stroke-width="1.7"/><rect x="2200.1" y="799.0" width="10" height="10" fill="#fff" stroke="#8e8e8e" stroke-width="1.7"/><rect x="2235.7" y="767.5" width="10" height="10" fill="#fff" stroke="#8e8e8e" stroke-width="1.7"/><rect x="2271.3" y="741.0" width="10" height="10" fill="#fff" stroke="#8e8e8e" stroke-width="1.7"/><rect x="2306.8" y="716.0" width="10" height="10" fill="#fff" stroke="#8e8e8e" stroke-width="1.7"/><rect x="2342.4" y="691.0" width="10" height="10" fill="#fff" stroke="#8e8e8e" stroke-width="1.7"/><rect x="2378.0" y="675.7" width="10" height="10" fill="#fff" stroke="#8e8e8e" stroke-width="1.7"/><rect x="2413.6" y="656.0" width="10" height="10" fill="#fff" stroke="#8e8e8e" stroke-width="1.7"/><rect x="2449.2" y="645.6" width="10" height="10" fill="#fff" stroke="#8e8e8e" stroke-width="1.7"/><rect x="2484.7" y="634.5" width="10" height="10" fill="#fff" stroke="#8e8e8e" stroke-width="1.7"/><rect x="2520.3" y="625.0" width="10" height="10" fill="#fff" stroke="#8e8e8e" stroke-width="1.7"/><path d="M959.8 1458.1 L966.3 1469.6 L953.3 1469.6 Z" fill="#1e961e"/><path d="M995.4 1458.1 L1001.9 1469.6 L988.9 1469.6 Z" fill="#1e961e"/><path d="M1031.0 1458.1 L1037.5 1469.6 L1024.5 1469.6 Z" fill="#1e961e"/><path d="M1066.5 1458.1 L1073.0 1469.6 L1060.0 1469.6 Z" fill="#1e961e"/><path d="M1102.1 1458.1 L1108.6 1469.6 L1095.6 1469.6 Z" fill="#1e961e"/><path d="M1137.7 1458.1 L1144.2 1469.6 L1131.2 1469.6 Z" fill="#1e961e"/><path d="M1173.3 1458.1 L1179.8 1469.6 L1166.8 1469.6 Z" fill="#1e961e"/><path d="M1208.9 1458.1 L1215.4 1469.6 L1202.4 1469.6 Z" fill="#1e961e"/><path d="M1244.4 1458.1 L1250.9 1469.6 L1237.9 1469.6 Z" fill="#1e961e"/><path d="M1280.0 1458.1 L1286.5 1469.6 L1273.5 1469.6 Z" fill="#1e961e"/><path d="M1315.6 1458.1 L1322.1 1469.6 L1309.1 1469.6 Z" fill="#1e961e"/><path d="M1351.2 1458.1 L1357.7 1469.6 L1344.7 1469.6 Z" fill="#1e961e"/><path d="M1386.8 1458.1 L1393.3 1469.6 L1380.3 1469.6 Z" fill="#1e961e"/><path d="M1422.3 1458.1 L1428.8 1469.6 L1415.8 1469.6 Z" fill="#1e961e"/><path d="M1457.9 1458.1 L1464.4 1469.6 L1451.4 1469.6 Z" fill="#1e961e"/><path d="M1493.5 1458.1 L1500.0 1469.6 L1487.0 1469.6 Z" fill="#1e961e"/><path d="M1529.1 1458.1 L1535.6 1469.6 L1522.6 1469.6 Z" fill="#1e961e"/><path d="M1564.7 1458.1 L1571.2 1469.6 L1558.2 1469.6 Z" fill="#1e961e"/><path d="M1600.2 1458.1 L1606.7 1469.6 L1593.7 1469.6 Z" fill="#1e961e"/><path d="M1635.8 1458.1 L1642.3 1469.6 L1629.3 1469.6 Z" fill="#1e961e"/><path d="M1671.4 1454.7 L1677.9 1466.2 L1664.9 1466.2 Z" fill="#1e961e"/><path d="M1707.0 1450.5 L1713.5 1462.0 L1700.5 1462.0 Z" fill="#1e961e"/><path d="M1742.6 1441.8 L1749.1 1453.3 L1736.1 1453.3 Z" fill="#1e961e"/><path d="M1778.1 1431.5 L1784.6 1443.0 L1771.6 1443.0 Z" fill="#1e961e"/><path d="M1813.7 1411.5 L1820.2 1423.0 L1807.2 1423.0 Z" fill="#1e961e"/><path d="M1849.3 1380.8 L1855.8 1392.3 L1842.8 1392.3 Z" fill="#1e961e"/><path d="M1884.9 1342.5 L1891.4 1354.0 L1878.4 1354.0 Z" fill="#1e961e"/><path d="M1920.5 1301.5 L1927.0 1313.0 L1914.0 1313.0 Z" fill="#1e961e"/><path d="M1956.0 1261.5 L1962.5 1273.0 L1949.5 1273.0 Z" fill="#1e961e"/><path d="M1991.6 1219.5 L1998.1 1231.0 L1985.1 1231.0 Z" fill="#1e961e"/><path d="M2027.2 1182.5 L2033.7 1194.0 L2020.7 1194.0 Z" fill="#1e961e"/><path d="M2062.8 1149.1 L2069.3 1160.6 L2056.3 1160.6 Z" fill="#1e961e"/><path d="M2098.4 1112.5 L2104.9 1124.0 L2091.9 1124.0 Z" fill="#1e961e"/><path d="M2133.9 1088.2 L2140.4 1099.7 L2127.4 1099.7 Z" fill="#1e961e"/><path d="M2169.5 1059.5 L2176.0 1071.0 L2163.0 1071.0 Z" fill="#1e961e"/><path d="M2205.1 1039.5 L2211.6 1051.0 L2198.6 1051.0 Z" fill="#1e961e"/><path d="M2240.7 1017.3 L2247.2 1028.8 L2234.2 1028.8 Z" fill="#1e961e"/><path d="M2276.3 993.0 L2282.8 1004.5 L2269.8 1004.5 Z" fill="#1e961e"/><path d="M2311.8 975.0 L2318.3 986.5 L2305.3 986.5 Z" fill="#1e961e"/><path d="M2347.4 959.1 L2353.9 970.6 L2340.9 970.6 Z" fill="#1e961e"/><path d="M2383.0 948.0 L2389.5 959.5 L2376.5 959.5 Z" fill="#1e961e"/><path d="M2418.6 934.5 L2425.1 946.0 L2412.1 946.0 Z" fill="#1e961e"/><path d="M2454.2 919.5 L2460.7 931.0 L2447.7 931.0 Z" fill="#1e961e"/><path d="M2489.7 905.5 L2496.2 917.0 L2483.2 917.0 Z" fill="#1e961e"/><path d="M2525.3 897.5 L2531.8 909.0 L2518.8 909.0 Z" fill="#1e961e"/><line x1="988" y1="1379.5" x2="2526" y2="1379.5" stroke="#14a814" stroke-width="4"/><rect x="958" y="1360" width="29" height="39" fill="#d8d8f8"/><path d="M972.5 1365 L980 1373 H975 V1386 H980 L972.5 1394 L965 1386 H970 V1373 H965 Z" fill="#111"/><text x="1074" y="1360" font-family="Liberation Sans" font-size="25" fill="#222" letter-spacing="-0.8">threshold = 4051</text><rect x="891.5" y="523.5" width="55" height="56" fill="#fff" stroke="#dcdcdc" stroke-width="1.5"/><circle cx="924.4" cy="544.4" r="14" fill="none" stroke="#222" stroke-width="3.2"/><line x1="896.7" y1="571.4" x2="912" y2="557" stroke="#111" stroke-width="4.2" stroke-linecap="round"/><path d="M927.6 550.8 L928.4 573 L933.5 568 L938.5 580 L943 578 L938 566.5 L945 566 Z" fill="#000" stroke="#fff" stroke-width="1.2"/></svg>
<svg class="a" style="left:0;top:0" width="2560" height="1600" viewBox="0 0 2560 1600"><rect x="1003" y="545" width="702" height="602" fill="#fff"/><line x1="1706.5" y1="499" x2="1706.5" y2="1145" stroke="#b0b0b0" stroke-width="2" stroke-dasharray="2.5 9"/><rect x="1083" y="503" width="618" height="42" fill="#f0f0f0" stroke="#e0e0e0" stroke-width="2"/><rect x="1086" y="506" width="80" height="36" fill="#fdfdfd" stroke="#e6e6e6" stroke-width="1.5"/><text x="1126.0" y="532" font-family="Liberation Sans" font-size="21" fill="#2e2e2e" stroke="#2e2e2e" stroke-width="0.15" text-anchor="middle" letter-spacing="0.3">Show</text><rect x="1169" y="506" width="74" height="36" fill="#fdfdfd" stroke="#e6e6e6" stroke-width="1.5"/><text x="1206.0" y="532" font-family="Liberation Sans" font-size="21" fill="#2e2e2e" stroke="#2e2e2e" stroke-width="0.15" text-anchor="middle" letter-spacing="0.3">Hide</text><rect x="1247" y="506" width="110" height="36" fill="#fdfdfd" stroke="#e6e6e6" stroke-width="1.5"/><text x="1302.0" y="532" font-family="Liberation Sans" font-size="21" fill="#2e2e2e" stroke="#2e2e2e" stroke-width="0.15" text-anchor="middle" letter-spacing="0.3">Delta Ct</text><rect x="1361" y="506" width="146" height="36" fill="#fdfdfd" stroke="#e6e6e6" stroke-width="1.5"/><text x="1434.0" y="532" font-family="Liberation Sans" font-size="21" fill="#2e2e2e" stroke="#2e2e2e" stroke-width="0.15" text-anchor="middle" letter-spacing="0.3">Fold change</text><rect x="1512" y="506" width="186" height="36" fill="#fdfdfd" stroke="#e6e6e6" stroke-width="1.5"/><text x="1605.0" y="532" font-family="Liberation Sans" font-size="21" fill="#2e2e2e" stroke="#2e2e2e" stroke-width="0.15" text-anchor="middle" letter-spacing="0.3">Standard Curve</text><rect x="1176" y="570" width="14" height="13" fill="#6fa0e8"/><rect x="1396" y="570" width="15" height="13" fill="#ec6a78"/><line x1="1074" y1="598.6" x2="1697" y2="598.6" stroke="#8c8c8c" stroke-width="2.2"/><text x="1070" y="605.6" font-family="Liberation Sans" font-size="20" fill="#1a1a1a" stroke="#1a1a1a" stroke-width="0.4" text-anchor="end" letter-spacing="0.6">20.0</text><line x1="1074" y1="663.3" x2="1697" y2="663.3" stroke="#8c8c8c" stroke-width="2.2"/><text x="1070" y="670.3" font-family="Liberation Sans" font-size="20" fill="#1a1a1a" stroke="#1a1a1a" stroke-width="0.4" text-anchor="end" letter-spacing="0.6">15.0</text><line x1="1074" y1="728.0" x2="1697" y2="728.0" stroke="#8c8c8c" stroke-width="2.2"/><text x="1070" y="735.0" font-family="Liberation Sans" font-size="20" fill="#1a1a1a" stroke="#1a1a1a" stroke-width="0.4" text-anchor="end" letter-spacing="0.6">10.0</text><line x1="1074" y1="792.7" x2="1697" y2="792.7" stroke="#8c8c8c" stroke-width="2.2"/><text x="1070" y="799.7" font-family="Liberation Sans" font-size="20" fill="#1a1a1a" stroke="#1a1a1a" stroke-width="0.4" text-anchor="end" letter-spacing="0.6">5.0</text><line x1="1074" y1="857.4" x2="1697" y2="857.4" stroke="#8c8c8c" stroke-width="2.2"/><text x="1070" y="864.4" font-family="Liberation Sans" font-size="20" fill="#1a1a1a" stroke="#1a1a1a" stroke-width="0.4" text-anchor="end" letter-spacing="0.6">0.0</text><line x1="1074" y1="922.1" x2="1697" y2="922.1" stroke="#8c8c8c" stroke-width="2.2"/><text x="1070" y="929.1" font-family="Liberation Sans" font-size="20" fill="#1a1a1a" stroke="#1a1a1a" stroke-width="0.4" text-anchor="end" letter-spacing="0.6">-5.0</text><line x1="1074" y1="986.8" x2="1697" y2="986.8" stroke="#8c8c8c" stroke-width="2.2"/><text x="1070" y="993.8" font-family="Liberation Sans" font-size="20" fill="#1a1a1a" stroke="#1a1a1a" stroke-width="0.4" text-anchor="end" letter-spacing="0.6">-10.0</text><line x1="1074" y1="1051.5" x2="1697" y2="1051.5" stroke="#8c8c8c" stroke-width="2.2"/><text x="1070" y="1058.5" font-family="Liberation Sans" font-size="20" fill="#1a1a1a" stroke="#1a1a1a" stroke-width="0.4" text-anchor="end" letter-spacing="0.6">-15.0</text><line x1="1074" y1="1116.2" x2="1697" y2="1116.2" stroke="#8c8c8c" stroke-width="2.2"/><text x="1070" y="1123.2" font-family="Liberation Sans" font-size="20" fill="#1a1a1a" stroke="#1a1a1a" stroke-width="0.4" text-anchor="end" letter-spacing="0.6">-20.0</text><line x1="1083.5" y1="591" x2="1083.5" y2="1133" stroke="#8c8c8c" stroke-width="2.2"/><line x1="1139.7" y1="857" x2="1139.7" y2="866" stroke="#999" stroke-width="2"/><line x1="1195.9" y1="857" x2="1195.9" y2="866" stroke="#999" stroke-width="2"/><line x1="1252.1" y1="857" x2="1252.1" y2="866" stroke="#999" stroke-width="2"/><line x1="1308.3" y1="857" x2="1308.3" y2="866" stroke="#999" stroke-width="2"/><line x1="1364.5" y1="857" x2="1364.5" y2="866" stroke="#999" stroke-width="2"/><line x1="1420.7" y1="857" x2="1420.7" y2="866" stroke="#999" stroke-width="2"/><line x1="1476.9" y1="857" x2="1476.9" y2="866" stroke="#999" stroke-width="2"/><line x1="1533.1" y1="857" x2="1533.1" y2="866" stroke="#999" stroke-width="2"/><line x1="1589.3" y1="857" x2="1589.3" y2="866" stroke="#999" stroke-width="2"/><line x1="1645.5" y1="857" x2="1645.5" y2="866" stroke="#999" stroke-width="2"/><line x1="1701.7" y1="857" x2="1701.7" y2="866" stroke="#999" stroke-width="2"/><text x="1111.6" y="884" font-family="Liberation Sans" font-size="19" fill="#222" text-anchor="middle" letter-spacing="-0.5">S1</text><text x="1167.8" y="884" font-family="Liberation Sans" font-size="19" fill="#222" text-anchor="middle" letter-spacing="-0.5">S2</text><text x="1224.0" y="884" font-family="Liberation Sans" font-size="19" fill="#222" text-anchor="middle" letter-spacing="-0.5">S3</text><text x="1280.2" y="884" font-family="Liberation Sans" font-size="19" fill="#222" text-anchor="middle" letter-spacing="-0.5">S4</text><text x="1336.4" y="884" font-family="Liberation Sans" font-size="19" fill="#222" text-anchor="middle" letter-spacing="-0.5">S5</text><text x="1392.6" y="884" font-family="Liberation Sans" font-size="19" fill="#222" text-anchor="middle" letter-spacing="-0.5">S6</text><text x="1448.8" y="884" font-family="Liberation Sans" font-size="19" fill="#222" text-anchor="middle" letter-spacing="-0.5">S7</text><text x="1505.0" y="884" font-family="Liberation Sans" font-size="19" fill="#222" text-anchor="middle" letter-spacing="-0.5">S8</text><text x="1561.2" y="884" font-family="Liberation Sans" font-size="19" fill="#222" text-anchor="middle" letter-spacing="-0.5">S9</text><text x="1617.4" y="884" font-family="Liberation Sans" font-size="19" fill="#222" text-anchor="middle" letter-spacing="-0.5">S10</text><text x="1673.6" y="884" font-family="Liberation Sans" font-size="19" fill="#222" text-anchor="middle" letter-spacing="-0.5">S11</text><text x="1379" y="1144" font-family="Liberation Sans" font-size="20" font-weight="bold" fill="#2a2a2a" text-anchor="middle" letter-spacing="0.4">Sample number</text><text transform="translate(1020,858) rotate(-90)" font-family="Liberation Sans" font-size="19" fill="#333" text-anchor="middle">&#916; Ct</text></svg>
<div class="t" style="left:118px;top:1517px;font-size:29px;color:#2f6fc4;letter-spacing:-0.4px;text-decoration:underline;text-decoration-thickness:2px;text-underline-offset:4px">Back to beginning</div>
</body></html>
